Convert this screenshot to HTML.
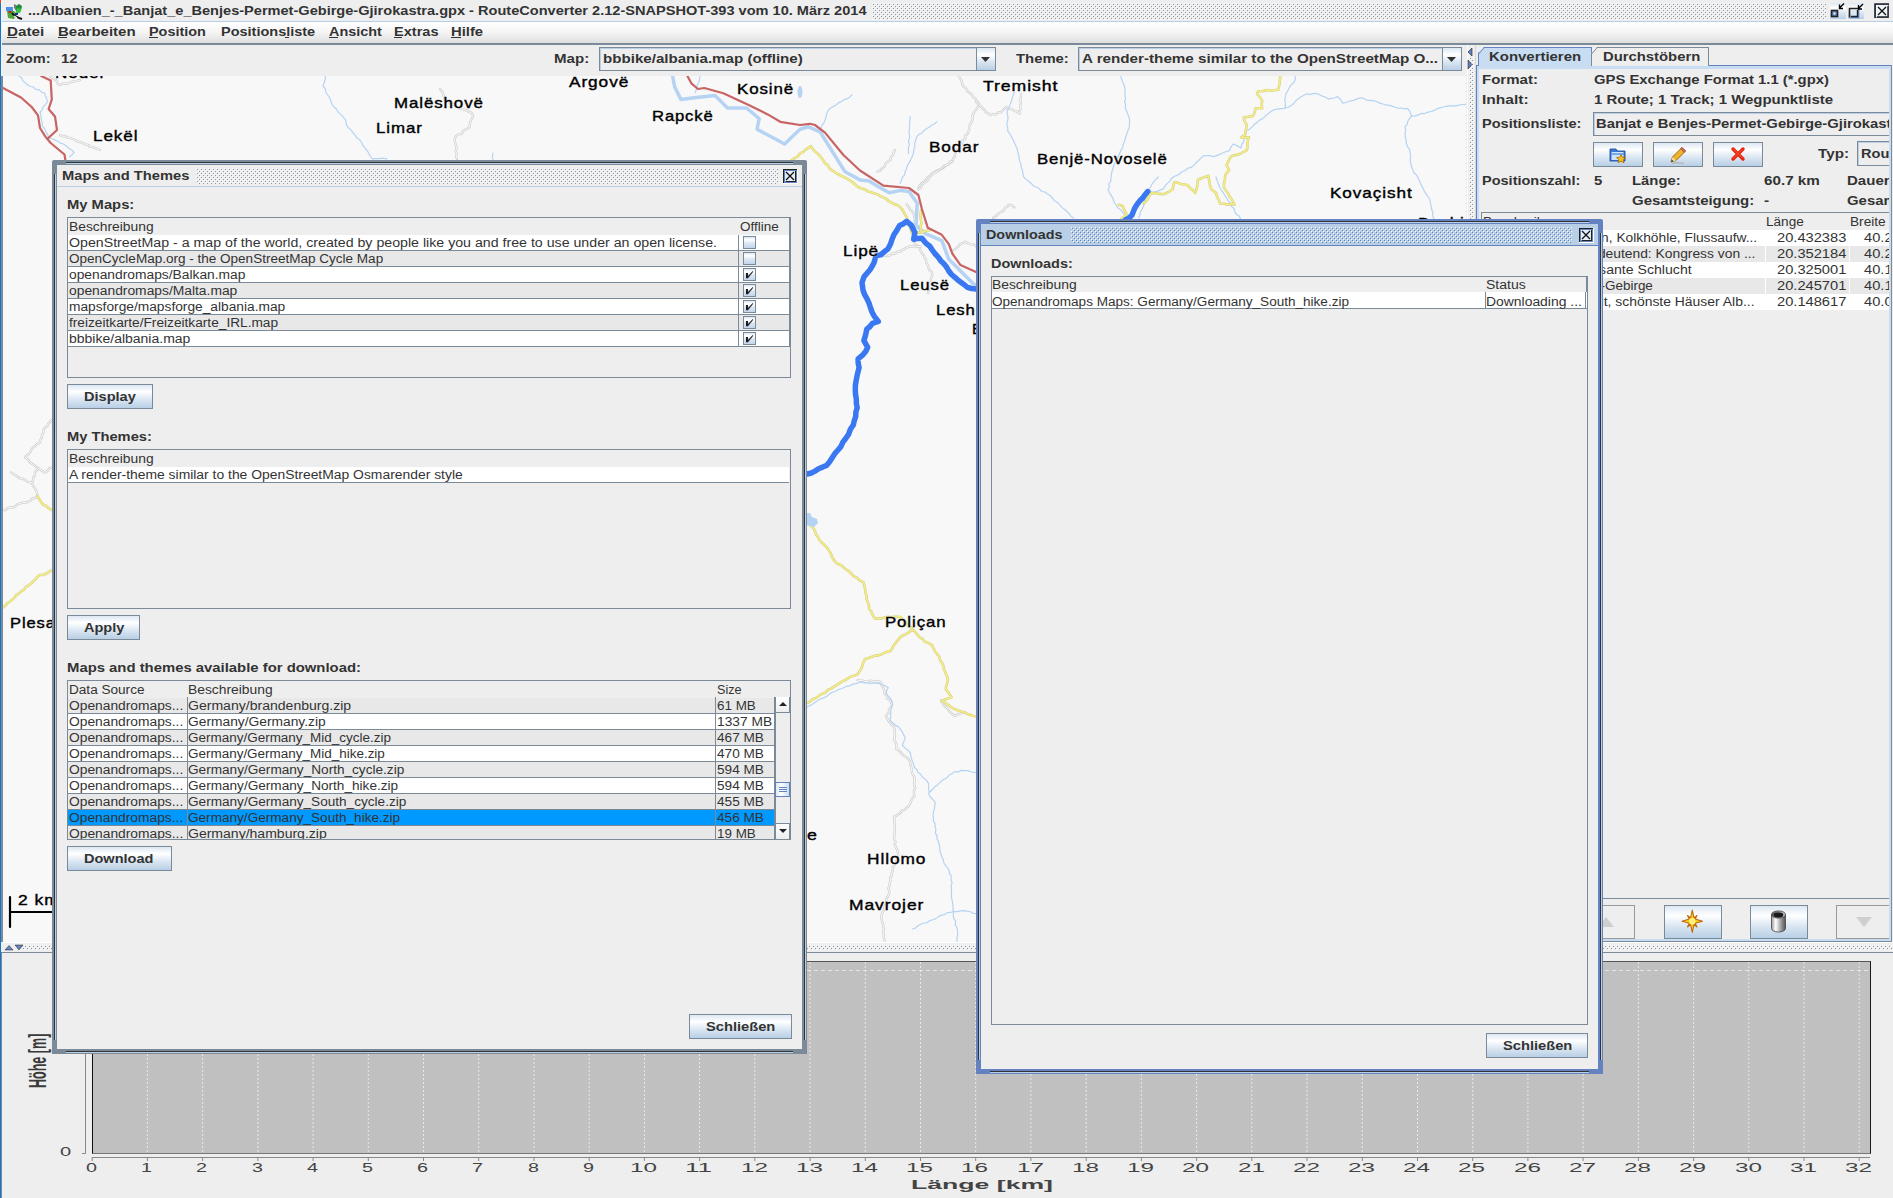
<!DOCTYPE html><html><head><meta charset="utf-8"><style>
html,body{margin:0;padding:0}
body{width:1893px;height:1198px;overflow:hidden;position:relative;background:#eeeeee;font-family:"Liberation Sans",sans-serif}
div{position:absolute;box-sizing:border-box}
.t{white-space:pre;transform-origin:0 0}
.bumps{background-image:radial-gradient(circle at 1px 1px,#8595a8 0.75px,transparent 1px),radial-gradient(circle at 3px 3px,#8595a8 0.75px,transparent 1px);background-size:4px 4px}
.bumpsA{background-image:radial-gradient(circle at 1px 1px,#6a7fb0 0.75px,transparent 1px),radial-gradient(circle at 3px 3px,#6a7fb0 0.75px,transparent 1px);background-size:4px 4px}
.btn{border:1px solid #7a8a99;background:linear-gradient(#dde8f3 0%,#fff 30%,#dde8f3 60%,#b8cfe5 100%)}
.dbtn{border:1px solid #999;background:#eee}
.grid{background:#fff}
</style></head><body><svg style="position:absolute;left:0;top:0" width="0" height="0"><defs>
<pattern id="bumpI" width="4" height="4" patternUnits="userSpaceOnUse"><rect x="0" y="0" width="1" height="1" fill="#ffffff"/><rect x="1" y="1" width="1" height="1" fill="#8797a8"/><rect x="2" y="2" width="1" height="1" fill="#ffffff"/><rect x="3" y="3" width="1" height="1" fill="#8797a8"/></pattern>
<pattern id="bumpA" width="4" height="4" patternUnits="userSpaceOnUse"><rect x="0" y="0" width="1" height="1" fill="#ffffff"/><rect x="1" y="1" width="1" height="1" fill="#6382bf"/><rect x="2" y="2" width="1" height="1" fill="#ffffff"/><rect x="3" y="3" width="1" height="1" fill="#6382bf"/></pattern>
</defs></svg><div style="left:0px;top:0px;width:1px;height:1198px;background:#1476c4"></div><div style="left:0px;top:0px;width:1px;height:3px;background:#ff3a10"></div><div style="left:1px;top:0px;width:1px;height:22px;background:#f4f4f4"></div><div style="left:2px;top:0px;width:1891px;height:21px;background:#eeeeee"></div><div style="left:2px;top:21px;width:1891px;height:1px;background:#b8cfe5"></div><svg style="position:absolute;left:5px;top:2px" width="18" height="18" viewBox="0 0 18 18"><path d="M14 2 L17 4 L16 9 L13 11 L11 9 L9 5 Z" fill="#1f8f3a"/><path d="M12 6 L16 7 L15 11 L11 11 Z" fill="#3ac24a"/><path d="M9 2 L11 3 L11 7 L9 6 Z" fill="#777"/><path d="M1 5 L8 5 L8 9 L1 9 Z" fill="#4a90e8"/><path d="M2 9 L9 9 L12 12 L9 17 L3 16 Z" fill="#4aa83a"/><ellipse cx="5" cy="10" rx="1.6" ry="0.9" fill="#e01010"/><path d="M7 11 Q10 15 17 17" stroke="#111" stroke-width="2" fill="none"/><path d="M9 14 L12 16" stroke="#fff" stroke-width="1.2"/><rect x="10" y="11" width="3" height="2" fill="#1a2aa0"/></svg><div class="t" style="left:27.5px;top:5.04px;font-size:12px;line-height:12px;font-weight:bold;color:#333;letter-spacing:0px;transform:scaleX(1.2136);">...Albanien_-_Banjat_e_Benjes-Permet-Gebirge-Gjirokastra.gpx - RouteConverter 2.12-SNAPSHOT-393 vom 10. März 2014</div><svg style="position:absolute;left:872px;top:3px" width="954" height="17"><rect x="0" y="0" width="954" height="17" fill="url(#bumpI)" transform="translate(0,0)"/></svg><svg style="position:absolute;left:1829px;top:3px" width="62" height="17" viewBox="0 0 62 17">
<defs><linearGradient id="tg" x1="0" y1="0" x2="0" y2="1"><stop offset="0" stop-color="#dde8f3"/><stop offset="0.3" stop-color="#fff"/><stop offset="0.6" stop-color="#dde8f3"/><stop offset="1" stop-color="#b8cfe5"/></linearGradient></defs>
<rect x="1" y="0" width="16" height="16" fill="url(#tg)"/>
<rect x="19" y="0" width="16" height="16" fill="url(#tg)"/>
<rect x="2.5" y="7.5" width="6" height="6" fill="#6382bf" stroke="#222" stroke-width="1.6"/>
<rect x="4.5" y="9.5" width="2" height="2" fill="#eef4fa"/>
<path d="M15 0.5 L10.5 5 M10.5 1.5 V5.5 H14" stroke="#000" stroke-width="1.4" fill="none"/>
<path d="M20.5 14.5 V5.5 H29.5" stroke="#222" stroke-width="1.6" fill="none"/><path d="M21 14.5 H29.5 V6" stroke="#6382bf" stroke-width="1.6" fill="none"/>
<path d="M22.5 13 V7 H28 V13 Z" fill="#dde8f3"/><path d="M22 13.5 H28.5 V7" stroke="#222" stroke-width="1.4" fill="none"/>
<path d="M34 1 L29.5 5.5 M29.5 2 V6 H33" stroke="#000" stroke-width="1.4" fill="none"/>
<rect x="46.5" y="1.5" width="13" height="13" fill="#eef4fa" stroke="#6382bf" stroke-width="1"/>
<path d="M46 15 V1 H60" stroke="#222" stroke-width="1.6" fill="none"/><path d="M48 14 H59 V3" stroke="#222" stroke-width="1.4" fill="none"/>
<path d="M49 4 L57 12 M57 4 L49 12" stroke="#111" stroke-width="1.3"/>
</svg><div style="left:2px;top:22px;width:1891px;height:21px;background:linear-gradient(#ffffff,#f4f4f4 50%,#dedede)"></div><div style="left:2px;top:43px;width:1891px;height:2px;background:#7a8a99"></div><div class="t" style="left:7.1px;top:25.54px;font-size:12px;line-height:12px;font-weight:bold;color:#333;letter-spacing:0px;transform:scaleX(1.2698);">Datei</div><div style="left:7px;top:37px;width:10px;height:1px;background:#333"></div><div class="t" style="left:58px;top:25.54px;font-size:12px;line-height:12px;font-weight:bold;color:#333;letter-spacing:0px;transform:scaleX(1.2514);">Bearbeiten</div><div style="left:58px;top:37px;width:9px;height:1px;background:#333"></div><div class="t" style="left:149.2px;top:25.54px;font-size:12px;line-height:12px;font-weight:bold;color:#333;letter-spacing:0px;transform:scaleX(1.2024);">Position</div><div style="left:149px;top:37px;width:9px;height:1px;background:#333"></div><div class="t" style="left:220.5px;top:25.54px;font-size:12px;line-height:12px;font-weight:bold;color:#333;letter-spacing:0px;transform:scaleX(1.2070);">Positionsliste</div><div style="left:285px;top:37px;width:4px;height:1px;background:#333"></div><div class="t" style="left:328.8px;top:25.54px;font-size:12px;line-height:12px;font-weight:bold;color:#333;letter-spacing:0px;transform:scaleX(1.1992);">Ansicht</div><div style="left:329px;top:37px;width:9px;height:1px;background:#333"></div><div class="t" style="left:394px;top:25.54px;font-size:12px;line-height:12px;font-weight:bold;color:#333;letter-spacing:0px;transform:scaleX(1.2126);">Extras</div><div style="left:394px;top:37px;width:8px;height:1px;background:#333"></div><div class="t" style="left:451px;top:25.54px;font-size:12px;line-height:12px;font-weight:bold;color:#333;letter-spacing:0px;transform:scaleX(1.2333);">Hilfe</div><div style="left:451px;top:37px;width:10px;height:1px;background:#333"></div><div style="left:2px;top:45px;width:1464px;height:31px;background:#eeeeee"></div><div class="t" style="left:5.7px;top:52.84px;font-size:12px;line-height:12px;font-weight:bold;color:#333;letter-spacing:0px;transform:scaleX(1.2141);">Zoom:</div><div class="t" style="left:60.5px;top:52.84px;font-size:12px;line-height:12px;font-weight:bold;color:#333;letter-spacing:0px;transform:scaleX(1.2396);">12</div><div class="t" style="left:554.4px;top:52.64px;font-size:12px;line-height:12px;font-weight:bold;color:#333;letter-spacing:0px;transform:scaleX(1.2568);">Map:</div><div class="t" style="left:1016px;top:52.64px;font-size:12px;line-height:12px;font-weight:bold;color:#333;letter-spacing:0px;transform:scaleX(1.2365);">Theme:</div><div style="left:599px;top:47px;width:397px;height:24px;border:1px solid #7a8a99;background:#eee"></div><div style="left:600px;top:48px;width:395px;height:22px;border:1px solid #b8cfe5;border-right:none;border-bottom:none"></div><div style="left:976px;top:47px;width:20px;height:24px;border:1px solid #7a8a99;background:linear-gradient(#dde8f3 0%,#fff 30%,#dde8f3 60%,#b8cfe5 100%)"></div><svg style="position:absolute;left:981px;top:57px" width="10" height="6"><path d="M0 0 L9 0 L4.5 5 Z" fill="#333"/></svg><div class="t" style="left:602.5px;top:52.64px;font-size:12px;line-height:12px;font-weight:bold;color:#333;letter-spacing:0px;transform:scaleX(1.2588);">bbbike/albania.map (offline)</div><div style="left:1078px;top:47px;width:384px;height:24px;border:1px solid #7a8a99;background:#eee"></div><div style="left:1079px;top:48px;width:382px;height:22px;border:1px solid #b8cfe5;border-right:none;border-bottom:none"></div><div style="left:1442px;top:47px;width:20px;height:24px;border:1px solid #7a8a99;background:linear-gradient(#dde8f3 0%,#fff 30%,#dde8f3 60%,#b8cfe5 100%)"></div><svg style="position:absolute;left:1447px;top:57px" width="10" height="6"><path d="M0 0 L9 0 L4.5 5 Z" fill="#333"/></svg><div class="t" style="left:1081.5px;top:52.64px;font-size:12px;line-height:12px;font-weight:bold;color:#333;letter-spacing:0px;transform:scaleX(1.2673);">A render-theme similar to the OpenStreetMap O...</div><div style="left:1px;top:76px;width:2px;height:866px;background:#7a8a99"></div><svg style="position:absolute;left:3px;top:76px" width="1463" height="866" viewBox="0 0 1463 866"><rect width="1463" height="866" fill="#f8f8f8"/><g fill="none" stroke-linejoin="round" stroke-linecap="round"><polyline points="955.6,0.0 957.1,2.5 958.7,5.1 959.1,8.1 960.6,10.7 963.0,12.3 964.3,14.9 966.4,16.8 968.7,18.5 970.0,21.1 972.5,22.7 973.8,25.2 975.6,27.4 975.0,30.2 973.8,32.7 972.0,35.0 970.6,37.4 969.3,39.9 969.8,42.8 968.9,45.4 967.5,47.9 966.3,50.3 966.2,53.1 965.6,55.8 964.4,58.1 962.2,59.7 962.3,62.7 959.7,64.1 959.3,66.8 958.2,69.2 956.9,71.3 955.3,73.3 953.1,75.0 952.3,77.5 951.7,80.5 950.0,83.0 949.0,85.8 946.7,86.9 944.7,88.6 942.3,89.6 940.5,91.7 938.3,93.0 935.9,94.1 933.3,94.6 931.3,96.3 929.0,97.5 927.3,99.7 925.0,101.2 923.3,103.3 921.5,105.4 919.0,106.7 917.2,108.7 915.5,110.9" stroke="#cfcfcf" stroke-width="2.4"/><polyline points="955.6,0.0 957.1,2.5 958.7,5.1 959.1,8.1 960.6,10.7 963.0,12.3 964.3,14.9 966.4,16.8 968.7,18.5 970.0,21.1 972.5,22.7 973.8,25.2 975.6,27.4 975.0,30.2 973.8,32.7 972.0,35.0 970.6,37.4 969.3,39.9 969.8,42.8 968.9,45.4 967.5,47.9 966.3,50.3 966.2,53.1 965.6,55.8 964.4,58.1 962.2,59.7 962.3,62.7 959.7,64.1 959.3,66.8 958.2,69.2 956.9,71.3 955.3,73.3 953.1,75.0 952.3,77.5 951.7,80.5 950.0,83.0 949.0,85.8 946.7,86.9 944.7,88.6 942.3,89.6 940.5,91.7 938.3,93.0 935.9,94.1 933.3,94.6 931.3,96.3 929.0,97.5 927.3,99.7 925.0,101.2 923.3,103.3 921.5,105.4 919.0,106.7 917.2,108.7 915.5,110.9" stroke="#fbfbfb" stroke-width="1"/><polyline points="973.0,25.7 975.5,27.6 977.3,30.2 979.6,32.3 981.5,34.0 983.1,36.2 985.3,37.6 987.5,39.0 990.1,38.0 993.0,38.5 995.3,36.3 998.1,36.3 1000.6,33.5 1003.4,31.0 1005.8,32.7 1009.0,33.1 1011.3,34.9 1014.3,35.5 1016.6,37.6 1017.1,34.8 1017.4,32.0 1017.3,29.1 1018.0,26.3 1017.2,23.4 1018.1,20.7 1017.9,17.8" stroke="#cfcfcf" stroke-width="2.4"/><polyline points="973.0,25.7 975.5,27.6 977.3,30.2 979.6,32.3 981.5,34.0 983.1,36.2 985.3,37.6 987.5,39.0 990.1,38.0 993.0,38.5 995.3,36.3 998.1,36.3 1000.6,33.5 1003.4,31.0 1005.8,32.7 1009.0,33.1 1011.3,34.9 1014.3,35.5 1016.6,37.6 1017.1,34.8 1017.4,32.0 1017.3,29.1 1018.0,26.3 1017.2,23.4 1018.1,20.7 1017.9,17.8" stroke="#fbfbfb" stroke-width="1"/><polyline points="990.2,142.0 992.3,140.5 994.2,138.8 996.1,137.0 998.5,135.9 1000.6,134.4 1002.0,132.1 1004.2,130.7 1006.0,128.8 1009.0,129.4 1011.3,131.4" stroke="#cfcfcf" stroke-width="2.4"/><polyline points="990.2,142.0 992.3,140.5 994.2,138.8 996.1,137.0 998.5,135.9 1000.6,134.4 1002.0,132.1 1004.2,130.7 1006.0,128.8 1009.0,129.4 1011.3,131.4" stroke="#fbfbfb" stroke-width="1"/><polyline points="854.6,604.0 857.1,604.6 859.7,604.7 862.2,605.6 864.8,605.5 867.4,604.7 870.0,605.1 872.5,605.9 875.1,604.9 877.6,606.0 878.6,608.9 880.1,611.6 881.2,614.4 881.5,617.5 883.7,619.4 884.1,622.4 886.6,624.0 888.0,626.4 889.1,629.0 888.0,631.4 886.0,633.2 886.0,636.2 884.2,638.2 882.9,640.4 884.5,642.5 885.6,644.9 887.3,646.9 888.9,649.0 891.0,650.6 891.7,653.4 891.7,656.2 892.0,659.0 891.4,661.9 891.5,664.7 893.2,667.3 893.4,670.1 893.1,673.0 895.5,674.3 897.5,676.1 899.3,678.1 901.2,680.0 903.6,681.3 905.4,683.3 907.1,685.6 907.3,688.5 908.2,691.1 908.8,693.9 909.0,696.7 910.3,699.2 911.5,701.7 911.5,704.3 911.3,706.9 911.2,709.5 912.3,712.2 910.8,714.8 911.0,717.4 911.5,720.0 909.4,722.2 908.0,724.9 907.1,727.8 905.4,730.3 903.4,731.9 901.7,733.8 899.1,734.5 897.6,736.8 895.6,738.3 893.4,739.6 891.0,740.6 891.6,743.4 891.3,746.2 891.8,749.0 891.9,751.8 891.6,754.6 891.7,757.4 891.2,760.2 891.0,763.0 892.5,765.5 891.7,768.6 892.9,771.3 894.4,773.8 894.9,776.6 895.2,779.4 894.5,782.0 893.6,784.5 893.1,787.1 891.0,789.2 889.8,791.6 889.8,794.4 888.8,796.9 888.6,799.7 887.0,801.9 887.4,804.6 886.7,807.2 886.6,809.8 885.3,812.4 886.2,815.1 886.1,817.8 885.0,820.3 883.3,822.7 883.2,825.5 882.9,828.4 881.4,830.8 881.4,833.7 879.6,836.1 878.8,838.7 878.2,841.3 878.7,843.8 879.2,846.3 880.3,848.8 880.3,851.3 880.9,853.8 880.1,856.4 880.8,858.9 880.6,861.5 881.7,863.9 882.1,866.4 881.9,869.0" stroke="#cfcfcf" stroke-width="2.4"/><polyline points="854.6,604.0 857.1,604.6 859.7,604.7 862.2,605.6 864.8,605.5 867.4,604.7 870.0,605.1 872.5,605.9 875.1,604.9 877.6,606.0 878.6,608.9 880.1,611.6 881.2,614.4 881.5,617.5 883.7,619.4 884.1,622.4 886.6,624.0 888.0,626.4 889.1,629.0 888.0,631.4 886.0,633.2 886.0,636.2 884.2,638.2 882.9,640.4 884.5,642.5 885.6,644.9 887.3,646.9 888.9,649.0 891.0,650.6 891.7,653.4 891.7,656.2 892.0,659.0 891.4,661.9 891.5,664.7 893.2,667.3 893.4,670.1 893.1,673.0 895.5,674.3 897.5,676.1 899.3,678.1 901.2,680.0 903.6,681.3 905.4,683.3 907.1,685.6 907.3,688.5 908.2,691.1 908.8,693.9 909.0,696.7 910.3,699.2 911.5,701.7 911.5,704.3 911.3,706.9 911.2,709.5 912.3,712.2 910.8,714.8 911.0,717.4 911.5,720.0 909.4,722.2 908.0,724.9 907.1,727.8 905.4,730.3 903.4,731.9 901.7,733.8 899.1,734.5 897.6,736.8 895.6,738.3 893.4,739.6 891.0,740.6 891.6,743.4 891.3,746.2 891.8,749.0 891.9,751.8 891.6,754.6 891.7,757.4 891.2,760.2 891.0,763.0 892.5,765.5 891.7,768.6 892.9,771.3 894.4,773.8 894.9,776.6 895.2,779.4 894.5,782.0 893.6,784.5 893.1,787.1 891.0,789.2 889.8,791.6 889.8,794.4 888.8,796.9 888.6,799.7 887.0,801.9 887.4,804.6 886.7,807.2 886.6,809.8 885.3,812.4 886.2,815.1 886.1,817.8 885.0,820.3 883.3,822.7 883.2,825.5 882.9,828.4 881.4,830.8 881.4,833.7 879.6,836.1 878.8,838.7 878.2,841.3 878.7,843.8 879.2,846.3 880.3,848.8 880.3,851.3 880.9,853.8 880.1,856.4 880.8,858.9 880.6,861.5 881.7,863.9 882.1,866.4 881.9,869.0" stroke="#fbfbfb" stroke-width="1"/><polyline points="938.0,624.0 939.1,626.3 940.3,628.5 942.0,630.4 944.0,632.0 945.6,634.4 947.6,636.4 949.7,638.3 952.0,640.0 954.3,638.5 957.0,638.0 959.4,636.8 962.0,636.0" stroke="#cfcfcf" stroke-width="2.4"/><polyline points="938.0,624.0 939.1,626.3 940.3,628.5 942.0,630.4 944.0,632.0 945.6,634.4 947.6,636.4 949.7,638.3 952.0,640.0 954.3,638.5 957.0,638.0 959.4,636.8 962.0,636.0" stroke="#fbfbfb" stroke-width="1"/><polyline points="437.0,13.0 439.0,15.4 440.3,18.1 441.1,21.1 442.0,24.0 444.5,24.8 446.5,26.7 448.6,28.3 451.4,28.7 453.3,30.7 455.6,32.0 458.0,33.1 460.8,33.4 463.2,34.4 465.6,35.6 467.9,36.7 470.0,38.4 469.9,41.1 468.5,43.4 467.3,45.8 466.8,48.3 466.7,51.0 464.6,52.5 462.3,53.8 460.1,55.1 458.7,57.7 456.0,58.3 453.7,59.5 452.0,61.6 451.7,64.3 452.1,66.9 452.8,69.5 453.6,72.1 452.7,74.9 453.8,77.5 453.2,80.2 454.0,82.8" stroke="#cfcfcf" stroke-width="2.4"/><polyline points="437.0,13.0 439.0,15.4 440.3,18.1 441.1,21.1 442.0,24.0 444.5,24.8 446.5,26.7 448.6,28.3 451.4,28.7 453.3,30.7 455.6,32.0 458.0,33.1 460.8,33.4 463.2,34.4 465.6,35.6 467.9,36.7 470.0,38.4 469.9,41.1 468.5,43.4 467.3,45.8 466.8,48.3 466.7,51.0 464.6,52.5 462.3,53.8 460.1,55.1 458.7,57.7 456.0,58.3 453.7,59.5 452.0,61.6 451.7,64.3 452.1,66.9 452.8,69.5 453.6,72.1 452.7,74.9 453.8,77.5 453.2,80.2 454.0,82.8" stroke="#fbfbfb" stroke-width="1"/><polyline points="0.0,434.0 2.7,434.0 4.8,432.2 7.3,431.3 10.0,431.4 12.4,430.2 14.5,428.4 16.9,427.5 19.4,426.7 22.0,426.5 24.8,426.0 27.2,424.8 29.2,422.5 32.0,422.0 34.5,420.0 33.9,417.1 33.1,414.3 31.5,411.8 29.9,409.3 29.0,406.5 30.1,404.0 30.4,401.3 32.0,399.0 31.8,396.3 34.2,394.2 34.0,391.5 31.8,389.6 29.4,388.1 27.0,386.5 25.1,383.4 22.0,381.5 23.6,379.5 25.8,378.1 27.4,376.1 28.3,373.5 30.0,371.6 32.0,370.0 34.3,367.9 37.0,366.5 37.4,363.9 38.8,361.5 39.1,358.9 40.2,356.5 40.5,353.8 42.0,351.5 44.3,350.1 45.3,347.6 47.2,345.8 49.0,344.0" stroke="#cfcfcf" stroke-width="2.4"/><polyline points="0.0,434.0 2.7,434.0 4.8,432.2 7.3,431.3 10.0,431.4 12.4,430.2 14.5,428.4 16.9,427.5 19.4,426.7 22.0,426.5 24.8,426.0 27.2,424.8 29.2,422.5 32.0,422.0 34.5,420.0 33.9,417.1 33.1,414.3 31.5,411.8 29.9,409.3 29.0,406.5 30.1,404.0 30.4,401.3 32.0,399.0 31.8,396.3 34.2,394.2 34.0,391.5 31.8,389.6 29.4,388.1 27.0,386.5 25.1,383.4 22.0,381.5 23.6,379.5 25.8,378.1 27.4,376.1 28.3,373.5 30.0,371.6 32.0,370.0 34.3,367.9 37.0,366.5 37.4,363.9 38.8,361.5 39.1,358.9 40.2,356.5 40.5,353.8 42.0,351.5 44.3,350.1 45.3,347.6 47.2,345.8 49.0,344.0" stroke="#fbfbfb" stroke-width="1"/><polyline points="8.0,396.5 12.0,399.0 14.4,400.4 16.7,402.2 19.6,402.6 22.0,404.0 25.2,406.0 29.0,406.5" stroke="#cfcfcf" stroke-width="2.4"/><polyline points="8.0,396.5 12.0,399.0 14.4,400.4 16.7,402.2 19.6,402.6 22.0,404.0 25.2,406.0 29.0,406.5" stroke="#fbfbfb" stroke-width="1"/><polyline points="34.0,391.5 36.7,393.2 39.3,394.9 42.0,396.5 44.4,394.9 46.2,392.5 49.0,391.5" stroke="#cfcfcf" stroke-width="2.4"/><polyline points="34.0,391.5 36.7,393.2 39.3,394.9 42.0,396.5 44.4,394.9 46.2,392.5 49.0,391.5" stroke="#fbfbfb" stroke-width="1"/><polyline points="47.0,0.0 49.1,1.7 51.4,3.2 53.6,4.7 54.6,7.6 57.0,9.0 59.4,7.8 62.0,7.7 64.6,7.5 67.0,6.6 69.4,5.6 72.0,5.3 74.5,4.7 77.0,4.0" stroke="#cfcfcf" stroke-width="2.4"/><polyline points="47.0,0.0 49.1,1.7 51.4,3.2 53.6,4.7 54.6,7.6 57.0,9.0 59.4,7.8 62.0,7.7 64.6,7.5 67.0,6.6 69.4,5.6 72.0,5.3 74.5,4.7 77.0,4.0" stroke="#fbfbfb" stroke-width="1"/><polyline points="57.0,59.0 59.3,60.3 62.2,60.0 64.5,61.6 67.1,61.9 69.6,62.8 72.0,64.0 74.4,65.5 77.2,66.0 79.8,67.1 82.2,68.4 85.0,69.0 87.1,70.7 89.8,70.9 92.1,72.2 94.6,73.0 97.0,74.0" stroke="#cfcfcf" stroke-width="2.4"/><polyline points="57.0,59.0 59.3,60.3 62.2,60.0 64.5,61.6 67.1,61.9 69.6,62.8 72.0,64.0 74.4,65.5 77.2,66.0 79.8,67.1 82.2,68.4 85.0,69.0 87.1,70.7 89.8,70.9 92.1,72.2 94.6,73.0 97.0,74.0" stroke="#fbfbfb" stroke-width="1"/><polyline points="903.7,128.4 905.4,130.7 906.9,133.3 909.0,135.3 910.7,137.7 911.2,140.5 911.9,143.3 911.6,146.3 913.0,149.0 911.9,151.5 910.8,154.0 909.8,156.6 910.2,159.5 909.0,162.0 910.4,164.2 911.2,166.8 912.8,168.8 915.3,170.3 916.8,172.5 917.7,175.0 919.0,177.3 920.8,179.4 921.7,181.8 923.1,184.1 923.3,186.9 924.8,189.1 925.5,191.7 926.5,194.1 928.8,195.9 929.4,198.5 928.4,201.1 927.8,203.8 928.1,206.7 926.1,209.0 925.3,211.7 925.9,214.6 924.8,217.2" stroke="#cfcfcf" stroke-width="2.4"/><polyline points="903.7,128.4 905.4,130.7 906.9,133.3 909.0,135.3 910.7,137.7 911.2,140.5 911.9,143.3 911.6,146.3 913.0,149.0 911.9,151.5 910.8,154.0 909.8,156.6 910.2,159.5 909.0,162.0 910.4,164.2 911.2,166.8 912.8,168.8 915.3,170.3 916.8,172.5 917.7,175.0 919.0,177.3 920.8,179.4 921.7,181.8 923.1,184.1 923.3,186.9 924.8,189.1 925.5,191.7 926.5,194.1 928.8,195.9 929.4,198.5 928.4,201.1 927.8,203.8 928.1,206.7 926.1,209.0 925.3,211.7 925.9,214.6 924.8,217.2" stroke="#fbfbfb" stroke-width="1"/><polyline points="915.4,113.2 917.9,111.6 919.1,108.8 921.2,106.8 923.8,105.3 925.5,102.9 927.0,100.4 929.0,98.3 931.6,97.0 934.1,95.5 936.3,93.6 938.8,92.2 940.6,90.3 942.8,89.1 945.3,88.3 946.7,85.9 949.3,85.2" stroke="#cfcfcf" stroke-width="2.4"/><polyline points="915.4,113.2 917.9,111.6 919.1,108.8 921.2,106.8 923.8,105.3 925.5,102.9 927.0,100.4 929.0,98.3 931.6,97.0 934.1,95.5 936.3,93.6 938.8,92.2 940.6,90.3 942.8,89.1 945.3,88.3 946.7,85.9 949.3,85.2" stroke="#fbfbfb" stroke-width="1"/><polyline points="950.5,174.0 952.9,172.4 955.1,170.6 957.0,168.4 959.7,167.2 962.2,165.8 964.8,167.2 967.6,168.1 970.6,168.5 973.0,170.4" stroke="#cfcfcf" stroke-width="2.4"/><polyline points="950.5,174.0 952.9,172.4 955.1,170.6 957.0,168.4 959.7,167.2 962.2,165.8 964.8,167.2 967.6,168.1 970.6,168.5 973.0,170.4" stroke="#fbfbfb" stroke-width="1"/><polyline points="874.5,95.7 877.2,94.4 879.1,92.2 881.5,90.5 882.6,87.4 885.0,85.6 887.4,84.0 887.8,81.2 890.2,79.2 890.5,76.3 892.0,74.0" stroke="#cfcfcf" stroke-width="2.4"/><polyline points="874.5,95.7 877.2,94.4 879.1,92.2 881.5,90.5 882.6,87.4 885.0,85.6 887.4,84.0 887.8,81.2 890.2,79.2 890.5,76.3 892.0,74.0" stroke="#fbfbfb" stroke-width="1"/><polyline points="876.9,181.0 879.3,179.8 881.9,179.7 884.6,180.0 887.1,179.2 889.4,177.7 892.0,177.5 894.1,175.8 897.0,175.8 899.1,174.1 901.5,173.1 903.7,171.6 906.4,170.6 909.2,170.3 912.1,171.2 914.9,170.5 917.7,170.4" stroke="#cfcfcf" stroke-width="2.4"/><polyline points="876.9,181.0 879.3,179.8 881.9,179.7 884.6,180.0 887.1,179.2 889.4,177.7 892.0,177.5 894.1,175.8 897.0,175.8 899.1,174.1 901.5,173.1 903.7,171.6 906.4,170.6 909.2,170.3 912.1,171.2 914.9,170.5 917.7,170.4" stroke="#fbfbfb" stroke-width="1"/><polyline points="16.0,0.0 18.6,1.8 19.8,4.8 22.2,6.7 24.5,8.8 27.1,10.5 30.4,11.0 32.7,13.3 36.0,13.7 38.4,16.1 41.4,17.0 42.5,19.9 43.7,22.7 44.5,25.7 42.6,28.3 40.3,30.7 39.1,33.8 37.0,36.3 38.1,39.6 38.1,43.2 39.1,46.5 39.3,50.0 41.4,52.6 42.9,55.6 44.6,58.4 45.6,61.6 48.7,62.5 51.6,63.9 54.6,65.2 57.3,67.1 60.4,68.0 63.2,69.9 65.7,72.2 68.6,73.9 71.0,76.4 69.1,78.7 66.8,80.7" stroke="#b5d3f3" stroke-width="1.2"/><polyline points="322.4,0.0 322.3,3.5 321.1,6.7 320.0,10.0 322.2,12.7 322.9,16.2 324.7,19.0 326.7,21.8 327.9,25.0 328.9,28.3 331.0,31.0 333.7,33.2 335.3,36.4 338.0,38.6 340.2,41.2 342.5,43.7 343.5,49.0 345.3,51.7 347.8,53.8 349.8,56.3 351.8,58.9 353.6,61.6 356.4,63.4 358.3,66.0 360.0,69.4 362.3,72.4 364.7,75.4 366.7,79.2 369.0,82.8 372.7,82.7 376.4,82.6 380.0,82.2 383.7,82.8" stroke="#b5d3f3" stroke-width="1.2"/><polyline points="697.0,0.0 696.5,3.5 695.6,7.0 693.7,10.1 693.3,13.7 692.0,17.0" stroke="#b5d3f3" stroke-width="1.2"/><polyline points="817.0,55.8 817.8,52.5 818.9,49.4 821.0,46.6 822.3,43.5 823.2,40.3 823.9,37.0 825.4,34.0 827.8,32.0 830.4,30.4 833.2,29.0 835.5,26.9 838.4,25.6 840.8,23.7 843.9,22.9 846.6,21.2 848.8,19.0" stroke="#b5d3f3" stroke-width="1.2"/><polyline points="897.0,107.5 898.4,104.5 899.4,101.4 901.6,98.8 902.2,95.4 903.6,92.4 904.5,89.2 906.3,86.4 907.8,83.5 909.2,80.5 910.5,77.5 910.7,74.1 911.8,70.8 911.7,67.3 912.7,64.1 913.7,60.8 915.9,58.5 918.7,56.9 920.9,54.7 923.5,52.8 926.2,51.2 928.7,49.2 931.5,47.8 934.0,45.8" stroke="#b5d3f3" stroke-width="1.2"/><polyline points="907.2,40.7 907.0,43.8 906.6,46.8 906.6,49.9 906.3,53.0 906.0,56.0 906.5,59.1 906.5,62.2 905.4,65.2 906.4,68.3 905.5,71.4 905.4,74.4 905.5,77.5" stroke="#b5d3f3" stroke-width="1.2"/><polyline points="1292.3,0.0 1292.3,3.3 1291.0,6.5 1288.2,8.8 1286.3,11.7 1284.7,14.8 1283.0,17.8 1282.3,21.4 1281.9,25.0 1282.5,28.7 1281.7,32.3 1278.2,32.7 1274.6,33.2 1271.1,33.7 1268.4,35.2 1266.1,37.0 1263.7,38.9 1261.5,41.0 1259.2,42.9 1256.2,44.4 1253.8,46.7 1251.1,48.6 1248.9,51.1 1246.4,53.3 1243.4,54.8 1242.8,58.4 1241.5,61.7 1240.7,65.3 1238.7,68.4 1238.1,72.0 1234.2,69.9 1230.2,68.0 1228.0,71.2 1226.2,74.6 1222.8,75.8 1219.5,77.0 1216.3,78.6 1213.0,79.9 1209.8,80.6 1206.6,79.5 1203.4,79.6 1200.2,79.9 1197.9,82.2 1195.6,84.5 1193.1,86.7 1191.0,89.2 1188.3,91.4 1184.8,92.2 1182.2,94.5 1179.0,95.8 1176.7,98.0 1173.9,99.4 1171.0,100.5 1168.5,102.4 1166.9,105.3 1164.3,107.4 1162.0,109.9 1160.6,112.9 1157.6,113.9 1154.7,115.1 1151.7,115.9 1148.7,116.9 1146.0,112.9 1144.7,115.7 1143.5,118.6 1142.7,121.6 1141.6,124.5 1141.3,127.7 1140.2,130.5 1139.0,133.4 1137.3,136.1 1136.8,139.2 1135.5,142.0" stroke="#b5d3f3" stroke-width="1.2"/><polyline points="1146.0,112.9 1147.9,110.6 1149.2,107.7 1151.1,105.4 1153.2,103.2 1155.3,101.0" stroke="#b5d3f3" stroke-width="1.2"/><polyline points="1213.0,101.0 1214.1,104.4 1215.4,107.7 1216.7,111.0 1218.3,114.2 1220.3,116.7 1221.8,119.5 1223.6,122.1 1225.4,124.8 1227.5,127.2 1228.4,130.4 1231.0,132.5 1231.8,135.8 1233.6,138.4 1236.4,140.3 1237.7,143.3 1239.4,146.0" stroke="#b5d3f3" stroke-width="1.2"/><polyline points="1281.7,32.3 1285.7,31.0 1288.3,29.4 1290.7,27.5 1292.6,25.0 1294.9,23.1 1297.8,21.1 1300.8,19.2 1304.1,17.8 1307.6,18.4 1311.2,17.4 1314.7,17.8 1318.2,19.7 1322.0,20.9 1325.3,23.1 1328.4,22.3 1331.6,22.0 1334.5,20.5 1337.6,23.5 1339.8,27.1 1343.4,26.5 1346.7,25.0 1350.3,24.4 1353.6,23.1 1357.0,21.8 1360.4,22.3 1363.5,24.1 1366.9,24.4 1370.4,24.7 1373.7,25.5 1376.8,27.1 1379.9,28.0 1383.0,28.8 1386.1,29.4 1389.3,30.1 1392.3,31.2 1395.3,32.3 1398.4,32.0 1401.4,32.8 1404.5,32.3 1407.1,36.0 1408.5,40.3 1411.8,39.8 1415.0,39.2 1417.9,37.4 1421.4,37.7 1424.4,36.3 1427.7,35.5 1430.9,34.7 1433.8,32.8 1437.0,31.9 1440.2,31.0 1444.1,30.2 1448.1,29.7 1451.9,30.1 1455.6,29.2 1459.3,28.5 1463.0,28.4" stroke="#b5d3f3" stroke-width="1.2"/><polyline points="1117.6,0.0 1118.6,3.0 1119.7,6.0 1121.0,8.9 1121.8,12.0 1122.2,15.2 1121.7,18.6 1122.5,22.0 1121.6,25.5 1122.6,28.9 1122.2,32.3 1123.8,35.3 1124.9,38.5 1126.2,41.6 1126.6,45.1 1126.4,48.7 1126.2,52.2 1124.5,55.3 1123.5,58.6 1122.5,62.0 1121.6,65.3 1120.2,68.5 1119.6,72.0 1117.5,74.8 1116.5,78.1 1114.7,81.1 1114.0,84.6 1111.6,87.3 1110.4,90.5 1109.8,93.5 1108.7,96.3 1108.2,99.3 1108.0,102.4 1107.7,105.5 1105.8,108.1 1106.3,111.4 1105.1,114.2 1106.7,117.1 1108.5,119.9 1110.1,122.8 1111.1,126.0 1113.0,128.8 1114.9,131.9 1118.0,133.9 1120.0,136.9 1122.7,139.2 1124.9,142.0" stroke="#b5d3f3" stroke-width="1.2"/><polyline points="1011.3,16.5 1010.1,19.3 1009.2,22.3 1008.4,25.3 1007.3,28.1 1006.2,31.0 1004.7,33.7 1004.1,36.7 1004.7,39.7 1005.1,42.7 1004.1,45.8 1004.0,48.8 1004.8,51.8 1004.7,54.8 1006.7,57.5 1008.2,60.4 1009.9,63.2 1011.2,66.3 1012.6,69.3 1014.0,72.2 1014.7,75.4 1015.6,78.5 1016.0,81.7 1016.5,84.9 1017.9,87.8 1018.2,91.2 1019.4,94.4 1020.0,97.7 1020.6,101.0 1023.2,103.4 1026.0,105.5 1028.6,107.8 1031.1,110.3 1034.1,111.3 1036.6,113.1 1038.7,115.5 1042.0,116.0 1044.3,118.0 1047.0,119.5 1049.3,122.0 1051.4,124.6 1054.4,126.4 1056.7,128.8 1058.9,131.4 1061.5,133.3 1063.8,135.5 1066.1,137.7 1068.0,140.4 1070.8,142.0" stroke="#b5d3f3" stroke-width="1.2"/><polyline points="1408.5,40.3 1406.4,42.7 1404.8,45.3 1404.1,48.5 1401.9,50.8 1402.8,53.9 1402.1,57.2 1402.1,60.4 1403.0,63.5 1403.2,66.7 1404.4,70.3 1406.5,73.5 1407.2,77.3 1407.7,80.6 1407.3,84.0 1407.7,87.2 1408.5,90.5 1409.6,93.6 1410.9,96.5 1413.3,98.8 1415.0,101.6 1416.4,104.4 1417.5,107.5 1419.0,110.3 1420.4,113.1 1421.7,115.9 1423.5,118.4 1425.2,121.0 1427.0,123.5 1427.2,126.8 1428.2,129.9 1428.6,133.2 1429.9,136.2 1429.5,139.6 1430.8,142.7 1431.0,146.0" stroke="#b5d3f3" stroke-width="1.2"/><polyline points="804.0,630.9 807.1,629.8 809.8,627.9 812.4,625.9 815.2,624.2 818.1,622.7 821.2,621.6 824.1,620.1 826.6,617.8 829.4,616.2 832.6,615.2 835.4,613.6 838.3,612.7 841.1,611.5 843.9,610.3 846.9,609.9 849.6,608.1 852.6,607.6 855.5,606.8 858.4,605.9 861.5,606.9 864.8,606.8 867.9,607.4 871.2,607.2 874.4,607.2 877.6,607.9 881.6,609.5 885.3,611.7 883.7,614.4 883.4,617.5 885.1,620.2 887.4,622.4 889.1,625.1 889.4,628.4 888.4,631.5 887.8,634.7 887.8,638.0 887.7,641.2 887.0,644.4 889.6,646.7 892.1,649.0 895.2,650.6 897.3,653.2 899.3,655.9 900.7,658.9 902.3,661.8 900.9,665.4 899.2,669.0 901.8,671.9 905.0,674.2 907.4,677.2 908.0,680.9 909.1,684.4 910.5,687.9 911.5,691.5 913.9,693.6 915.1,696.6 917.8,698.3 919.3,701.1 922.0,702.9 924.1,705.2 925.8,707.8 925.4,711.2 926.1,714.6 925.8,718.0 927.4,721.1 929.9,723.5 932.0,726.2 931.9,729.3 931.4,732.4 930.6,735.4 930.0,738.5 930.3,741.6 930.4,744.7 932.0,747.6 932.1,750.7 932.9,753.7 932.3,757.0 934.0,759.9 934.0,763.0 935.5,765.7 936.3,768.7 936.8,771.7 937.0,774.9 937.8,777.8 938.9,780.7 940.1,783.5 940.8,786.5 942.3,789.2 944.4,791.6 946.0,794.2 946.4,797.4 948.3,799.9 948.0,803.3 949.0,806.7 948.1,810.1 948.5,813.5 948.5,816.9 948.3,820.3 948.9,823.3 949.5,826.4 950.0,829.4 950.0,832.5 950.3,835.6 950.4,838.7 950.6,842.1 952.6,845.1 952.2,848.6 954.1,851.6 954.5,855.0 954.7,858.5 954.0,862.0 954.0,865.5 954.5,869.0" stroke="#b5d3f3" stroke-width="1.2"/><polyline points="926.9,716.0 929.5,713.5 931.8,710.7 934.8,708.7 937.3,706.1 940.1,703.8 943.5,702.2 946.0,699.3 949.2,697.5 952.4,695.6 955.5,695.9 958.5,694.4 961.6,694.7 964.7,694.6 968.7,696.0 973.0,696.6" stroke="#b5d3f3" stroke-width="1.2"/><polyline points="909.5,853.0 912.6,852.0 915.0,849.7 917.9,848.3 920.8,847.0 924.2,846.7 926.7,844.5 929.9,843.8 932.9,842.6 935.4,840.6 938.3,839.1 941.6,838.6 944.2,836.7 947.5,836.4 950.7,835.5 954.1,835.7 957.3,834.8 960.6,834.6 963.8,835.1 967.0,835.5 969.8,837.3 973.0,837.7" stroke="#b5d3f3" stroke-width="1.2"/><polyline points="490.0,77.0 489.4,80.5 490.0,84.0" stroke="#b5d3f3" stroke-width="1.2"/><polyline points="669.6,0.0 671.7,11.0 678.0,23.6 693.0,21.5 712.0,19.4 724.5,32.0 743.5,32.0 756.2,42.6 754.0,53.2 781.6,68.0 797.0,53.2 805.4,50.8 817.0,55.8 842.0,95.8 857.0,103.9 866.3,105.0 875.7,110.9 886.2,116.7 897.9,114.4 906.0,115.5 914.2,127.2 913.0,149.4 922.4,157.6 938.8,164.6 945.8,183.3 959.8,197.3 970.3,207.8 973.0,209.0" stroke="#b5d3f3" stroke-width="3.5"/><polyline points="788.7,84.0 791.7,82.1 794.9,80.3 797.1,77.4 800.4,75.8 802.7,73.6 805.4,71.9 807.9,70.0 809.6,72.8 811.6,75.2 814.2,77.2 816.4,79.5 818.4,82.0 820.4,84.5 822.1,87.3 824.8,89.1 826.3,92.0 828.7,94.2 831.6,96.1 834.6,97.9 837.6,99.5 840.7,101.0 843.8,102.5 846.6,104.2 849.2,106.1 851.8,108.1 854.2,110.4 857.0,112.0 860.1,112.7 863.0,114.0 865.7,115.8 868.8,116.4 871.8,117.4 874.8,118.5 877.5,120.3 880.4,121.4 883.2,122.8 885.5,125.0 888.3,126.4 891.0,128.1 894.1,128.9 896.7,130.7 898.9,133.0 900.6,135.7 902.0,138.6 903.7,141.2 904.4,144.3 905.6,147.3 906.8,150.2 907.6,153.3 908.4,156.4 911.5,156.5 914.6,156.6 917.7,156.4" stroke="#d8d080" stroke-width="2.6"/><polyline points="788.7,84.0 791.7,82.1 794.9,80.3 797.1,77.4 800.4,75.8 802.7,73.6 805.4,71.9 807.9,70.0 809.6,72.8 811.6,75.2 814.2,77.2 816.4,79.5 818.4,82.0 820.4,84.5 822.1,87.3 824.8,89.1 826.3,92.0 828.7,94.2 831.6,96.1 834.6,97.9 837.6,99.5 840.7,101.0 843.8,102.5 846.6,104.2 849.2,106.1 851.8,108.1 854.2,110.4 857.0,112.0 860.1,112.7 863.0,114.0 865.7,115.8 868.8,116.4 871.8,117.4 874.8,118.5 877.5,120.3 880.4,121.4 883.2,122.8 885.5,125.0 888.3,126.4 891.0,128.1 894.1,128.9 896.7,130.7 898.9,133.0 900.6,135.7 902.0,138.6 903.7,141.2 904.4,144.3 905.6,147.3 906.8,150.2 907.6,153.3 908.4,156.4 911.5,156.5 914.6,156.6 917.7,156.4" stroke="#f4ee88" stroke-width="1.4"/><polyline points="918.0,134.2 917.7,137.4 917.6,140.5 917.8,143.7 918.5,146.9 917.6,150.1 918.2,153.2 918.0,156.4 921.0,155.7 924.0,154.7 927.0,154.1" stroke="#d8d080" stroke-width="2.6"/><polyline points="918.0,134.2 917.7,137.4 917.6,140.5 917.8,143.7 918.5,146.9 917.6,150.1 918.2,153.2 918.0,156.4 921.0,155.7 924.0,154.7 927.0,154.1" stroke="#f4ee88" stroke-width="1.4"/><polyline points="1277.7,0.0 1276.8,3.4 1276.8,7.0 1276.0,10.4 1275.1,13.8 1271.8,14.3 1268.5,14.7 1265.2,14.0 1261.9,14.6 1258.6,15.2 1255.3,15.2 1254.0,17.8 1256.7,21.0 1259.2,24.4 1258.6,28.3 1259.2,32.3 1255.9,32.3 1252.6,32.3 1251.6,36.4 1250.0,40.3 1246.8,40.4 1243.8,41.0 1240.7,41.6 1241.5,45.1 1243.4,48.2 1243.4,51.8 1242.5,55.3 1242.0,58.8 1238.1,61.4 1242.0,61.8 1246.0,61.4 1244.9,64.6 1244.2,67.9 1244.6,71.4 1243.4,74.6 1240.3,76.1 1237.2,77.7 1234.0,78.9 1230.5,79.4 1227.5,81.2 1225.5,85.1 1223.6,89.1 1226.2,94.4 1223.8,96.7 1222.2,99.7 1221.9,103.7 1220.9,107.6 1220.9,111.6 1223.0,114.5 1225.1,117.4 1226.6,120.7 1228.9,123.5 1231.5,128.8 1227.9,127.9 1224.2,128.6 1220.6,127.7 1217.0,127.5 1215.8,123.9 1214.0,120.6 1213.0,116.9 1210.5,115.0 1208.1,112.9 1207.0,109.7 1206.5,106.4 1205.9,103.1 1205.5,99.7 1201.9,100.9 1198.4,102.2 1194.9,103.7 1194.6,107.1 1194.2,110.4 1193.2,113.6 1192.3,116.9 1189.8,114.1 1186.8,111.9 1184.4,109.0 1181.1,108.5 1177.7,108.0 1174.6,106.6 1171.2,106.3 1170.4,109.6 1169.8,112.9 1167.0,115.1 1163.9,116.8 1160.6,118.2 1156.6,117.9 1152.7,117.3 1148.7,116.9 1146.6,119.5 1145.1,122.5 1143.1,125.1 1140.8,127.5" stroke="#d8d080" stroke-width="2.6"/><polyline points="1277.7,0.0 1276.8,3.4 1276.8,7.0 1276.0,10.4 1275.1,13.8 1271.8,14.3 1268.5,14.7 1265.2,14.0 1261.9,14.6 1258.6,15.2 1255.3,15.2 1254.0,17.8 1256.7,21.0 1259.2,24.4 1258.6,28.3 1259.2,32.3 1255.9,32.3 1252.6,32.3 1251.6,36.4 1250.0,40.3 1246.8,40.4 1243.8,41.0 1240.7,41.6 1241.5,45.1 1243.4,48.2 1243.4,51.8 1242.5,55.3 1242.0,58.8 1238.1,61.4 1242.0,61.8 1246.0,61.4 1244.9,64.6 1244.2,67.9 1244.6,71.4 1243.4,74.6 1240.3,76.1 1237.2,77.7 1234.0,78.9 1230.5,79.4 1227.5,81.2 1225.5,85.1 1223.6,89.1 1226.2,94.4 1223.8,96.7 1222.2,99.7 1221.9,103.7 1220.9,107.6 1220.9,111.6 1223.0,114.5 1225.1,117.4 1226.6,120.7 1228.9,123.5 1231.5,128.8 1227.9,127.9 1224.2,128.6 1220.6,127.7 1217.0,127.5 1215.8,123.9 1214.0,120.6 1213.0,116.9 1210.5,115.0 1208.1,112.9 1207.0,109.7 1206.5,106.4 1205.9,103.1 1205.5,99.7 1201.9,100.9 1198.4,102.2 1194.9,103.7 1194.6,107.1 1194.2,110.4 1193.2,113.6 1192.3,116.9 1189.8,114.1 1186.8,111.9 1184.4,109.0 1181.1,108.5 1177.7,108.0 1174.6,106.6 1171.2,106.3 1170.4,109.6 1169.8,112.9 1167.0,115.1 1163.9,116.8 1160.6,118.2 1156.6,117.9 1152.7,117.3 1148.7,116.9 1146.6,119.5 1145.1,122.5 1143.1,125.1 1140.8,127.5" stroke="#f4ee88" stroke-width="1.4"/><polyline points="1115.7,128.8 1119.6,130.1 1121.4,134.2 1123.6,138.0 1121.0,140.6 1118.3,143.0" stroke="#d8d080" stroke-width="2.6"/><polyline points="1115.7,128.8 1119.6,130.1 1121.4,134.2 1123.6,138.0 1121.0,140.6 1118.3,143.0" stroke="#f4ee88" stroke-width="1.4"/><polyline points="804.0,446.6 807.4,449.3 810.4,452.4 812.1,455.2 812.8,458.4 815.0,460.9 816.2,463.9 818.7,466.5 821.5,468.9 823.9,471.6 825.9,474.4 827.7,477.3 829.2,481.3 831.5,485.0 833.9,487.4 837.0,488.7 839.8,490.5 842.1,492.9 845.0,494.6 848.1,497.3 850.7,500.4 854.2,501.8 856.9,504.6 860.3,506.1 861.4,509.9 862.3,513.8 862.6,517.1 863.7,520.2 863.7,523.5 864.9,526.6 865.9,529.7 866.1,533.0 868.5,535.9 869.9,539.4 871.9,542.6 875.1,542.4 878.4,542.4 881.5,541.6 884.5,540.9 887.6,541.4 890.7,540.9 893.7,540.9 896.8,540.7 899.3,542.6 901.5,545.0 903.5,547.4 905.4,550.0 908.3,551.5 910.2,554.1 912.5,556.4 914.6,559.0 916.8,561.4 919.7,563.0 921.8,565.6 925.8,567.2 929.4,569.5 930.5,572.6 932.1,575.5 934.2,578.1 936.3,580.7 937.0,584.1 939.0,586.7 940.3,589.7 940.9,593.0 942.3,596.0 943.3,599.2 944.8,602.1 944.6,606.0 943.2,609.7 942.9,613.6 945.1,616.0 946.8,618.7 948.6,621.3 945.2,622.2 942.1,623.5 939.0,625.1 942.1,626.7 945.0,628.7 947.8,630.8 950.6,632.8 953.7,634.0 956.8,635.0 959.9,635.9 962.9,637.2 965.9,638.6 969.4,639.8 973.0,640.5" stroke="#d8d080" stroke-width="2.6"/><polyline points="804.0,446.6 807.4,449.3 810.4,452.4 812.1,455.2 812.8,458.4 815.0,460.9 816.2,463.9 818.7,466.5 821.5,468.9 823.9,471.6 825.9,474.4 827.7,477.3 829.2,481.3 831.5,485.0 833.9,487.4 837.0,488.7 839.8,490.5 842.1,492.9 845.0,494.6 848.1,497.3 850.7,500.4 854.2,501.8 856.9,504.6 860.3,506.1 861.4,509.9 862.3,513.8 862.6,517.1 863.7,520.2 863.7,523.5 864.9,526.6 865.9,529.7 866.1,533.0 868.5,535.9 869.9,539.4 871.9,542.6 875.1,542.4 878.4,542.4 881.5,541.6 884.5,540.9 887.6,541.4 890.7,540.9 893.7,540.9 896.8,540.7 899.3,542.6 901.5,545.0 903.5,547.4 905.4,550.0 908.3,551.5 910.2,554.1 912.5,556.4 914.6,559.0 916.8,561.4 919.7,563.0 921.8,565.6 925.8,567.2 929.4,569.5 930.5,572.6 932.1,575.5 934.2,578.1 936.3,580.7 937.0,584.1 939.0,586.7 940.3,589.7 940.9,593.0 942.3,596.0 943.3,599.2 944.8,602.1 944.6,606.0 943.2,609.7 942.9,613.6 945.1,616.0 946.8,618.7 948.6,621.3 945.2,622.2 942.1,623.5 939.0,625.1 942.1,626.7 945.0,628.7 947.8,630.8 950.6,632.8 953.7,634.0 956.8,635.0 959.9,635.9 962.9,637.2 965.9,638.6 969.4,639.8 973.0,640.5" stroke="#f4ee88" stroke-width="1.4"/><polyline points="804.0,627.0 806.9,625.8 809.1,623.4 812.0,622.3 814.8,620.9 817.1,618.6 820.0,617.5 822.8,616.2 824.9,613.9 827.8,612.8 830.3,611.2 832.9,609.6 835.4,607.9 838.0,606.2 840.7,604.7 843.5,603.4 846.1,601.7 848.8,600.2 851.8,599.4 854.6,598.3 856.4,595.4 858.4,592.5 859.6,589.3 860.5,585.9 862.3,582.9 865.5,582.1 868.5,581.0 871.5,579.7 874.8,579.4 878.0,578.4 881.0,577.1 884.0,575.8 887.2,575.2 889.1,572.5 890.7,569.6 892.6,566.9 894.8,564.4 896.8,561.8 899.2,559.8 902.1,558.7 904.8,557.2 907.2,555.2 910.2,554.1" stroke="#d8d080" stroke-width="2.6"/><polyline points="804.0,627.0 806.9,625.8 809.1,623.4 812.0,622.3 814.8,620.9 817.1,618.6 820.0,617.5 822.8,616.2 824.9,613.9 827.8,612.8 830.3,611.2 832.9,609.6 835.4,607.9 838.0,606.2 840.7,604.7 843.5,603.4 846.1,601.7 848.8,600.2 851.8,599.4 854.6,598.3 856.4,595.4 858.4,592.5 859.6,589.3 860.5,585.9 862.3,582.9 865.5,582.1 868.5,581.0 871.5,579.7 874.8,579.4 878.0,578.4 881.0,577.1 884.0,575.8 887.2,575.2 889.1,572.5 890.7,569.6 892.6,566.9 894.8,564.4 896.8,561.8 899.2,559.8 902.1,558.7 904.8,557.2 907.2,555.2 910.2,554.1" stroke="#f4ee88" stroke-width="1.4"/><polyline points="0.0,531.5 2.4,529.6 4.3,527.1 7.1,525.6 9.5,523.6 11.6,521.4 13.5,518.9 16.2,517.3 18.4,515.1 21.2,513.6 22.8,510.9 25.7,509.5 28.1,507.6 30.2,505.3 32.6,503.3 34.4,500.8 37.0,499.0 40.1,499.0 43.0,497.8 46.0,495.9 49.0,494.0" stroke="#d8d080" stroke-width="2.6"/><polyline points="0.0,531.5 2.4,529.6 4.3,527.1 7.1,525.6 9.5,523.6 11.6,521.4 13.5,518.9 16.2,517.3 18.4,515.1 21.2,513.6 22.8,510.9 25.7,509.5 28.1,507.6 30.2,505.3 32.6,503.3 34.4,500.8 37.0,499.0 40.1,499.0 43.0,497.8 46.0,495.9 49.0,494.0" stroke="#f4ee88" stroke-width="1.4"/><polyline points="34.5,420.0 36.2,423.3 38.3,426.3 40.8,429.0 43.7,430.3 46.1,432.6 49.0,434.0" stroke="#d8d080" stroke-width="2.6"/><polyline points="34.5,420.0 36.2,423.3 38.3,426.3 40.8,429.0 43.7,430.3 46.1,432.6 49.0,434.0" stroke="#f4ee88" stroke-width="1.4"/><polyline points="0.0,12.0 18.0,21.5 28.7,31.0 35.0,39.4 37.0,52.0 42.4,60.6 47.7,67.0 61.5,78.5 62.5,85.0" stroke="#c86464" stroke-width="2.2"/><polyline points="38.2,0.0 47.7,4.6 48.8,23.6 45.6,33.0 52.0,40.5 54.0,54.0 44.5,62.7" stroke="#c86464" stroke-width="2.2"/><polyline points="684.4,0.0 688.6,7.7 695.0,13.0 701.3,12.0 720.3,17.2 745.7,28.9 764.7,38.4 777.3,45.8 797.0,49.0 807.0,47.8 812.0,49.0 822.0,56.6 840.4,79.0 857.0,94.5 880.4,109.7 906.0,112.0 915.4,119.0 918.9,133.0 924.8,151.8 938.8,158.8 945.8,168.1 949.3,177.5 957.5,189.1 973.0,196.1" stroke="#c86464" stroke-width="2.2"/><ellipse cx="797" cy="16" rx="2.5" ry="6" fill="#b5d3f3"/><path d="M803 437 l4 0 l2 4 l5 2 l1 4 l-4 4 l-8 -2 z" fill="#b5d3f3"/><polyline points="804.3,398.0 808.3,397.0 812.0,395.1 815.6,392.7 819.6,391.1 823.5,389.4 826.6,385.7 829.2,381.7 831.8,377.6 835.0,374.0 838.0,370.4 839.9,366.2 842.7,362.5 845.6,358.2 847.4,353.3 850.3,349.0 851.3,344.7 852.7,340.5 852.9,336.0 854.2,331.8 853.4,327.5 853.3,323.1 852.6,318.8 852.3,314.5 852.4,309.3 853.2,304.3 854.2,299.2 856.1,291.5 855.2,287.2 855.1,282.8 859.3,279.4 862.8,275.2 864.7,271.3 860.9,264.6 862.6,258.9 863.8,253.1 867.0,250.5 869.5,247.3 875.3,245.4 871.5,240.6 869.2,236.5 867.6,232.0 866.0,227.1 863.8,222.4 861.5,218.4 860.0,214.0 859.0,206.7 861.0,200.8 864.0,197.3 867.0,193.8 869.1,190.4 871.0,186.8 873.0,179.8 878.0,178.6 881.4,175.6 885.0,172.8 887.4,168.3 889.0,163.5 890.9,158.8 893.9,154.2 896.7,149.4 900.4,147.7 903.7,145.3 908.4,149.4 911.9,156.4 910.7,163.4 914.7,162.4 918.9,162.3 922.5,166.8 927.0,170.4 929.3,174.0 931.8,177.5 935.0,180.9 937.7,184.7 941.1,188.0 943.7,191.3 945.8,195.0 948.5,198.5 951.9,201.3 955.1,204.3 959.9,207.7 964.5,211.3 968.7,212.5 973.0,213.0" stroke="#3a78f2" stroke-width="5.5"/><polyline points="1144.7,115.6 1142.1,118.7 1139.7,122.0 1136.8,124.8 1133.9,128.6 1131.5,132.7 1128.9,139.3 1125.9,142.1 1122.3,144.0" stroke="#3a78f2" stroke-width="5.5"/><path d="M7 821 V851 M7 836 H57" stroke="#000" stroke-width="2.2"/></g></svg><div style="left:3px;top:76px;width:1463px;height:866px;overflow:hidden"><div class="t" style="left:52px;top:-10.70px;font-size:15px;line-height:15px;font-weight:normal;color:#000;letter-spacing:0.8px;transform:scaleX(1.1393);-webkit-text-stroke:0.4px #000;text-shadow:0 0 1px #fff,0 0 1px #fff,0 0 1px #fff">Nodel</div><div class="t" style="left:90px;top:52.10px;font-size:15px;line-height:15px;font-weight:normal;color:#000;letter-spacing:0.8px;transform:scaleX(1.1383);-webkit-text-stroke:0.4px #000;text-shadow:0 0 1px #fff,0 0 1px #fff,0 0 1px #fff">Lekël</div><div class="t" style="left:391px;top:19.30px;font-size:15px;line-height:15px;font-weight:normal;color:#000;letter-spacing:0.8px;transform:scaleX(1.1260);-webkit-text-stroke:0.4px #000;text-shadow:0 0 1px #fff,0 0 1px #fff,0 0 1px #fff">Malëshovë</div><div class="t" style="left:372.5px;top:44.00px;font-size:15px;line-height:15px;font-weight:normal;color:#000;letter-spacing:0.8px;transform:scaleX(1.1273);-webkit-text-stroke:0.4px #000;text-shadow:0 0 1px #fff,0 0 1px #fff,0 0 1px #fff">Limar</div><div class="t" style="left:566.2px;top:-1.70px;font-size:15px;line-height:15px;font-weight:normal;color:#000;letter-spacing:0.8px;transform:scaleX(1.1504);-webkit-text-stroke:0.4px #000;text-shadow:0 0 1px #fff,0 0 1px #fff,0 0 1px #fff">Argovë</div><div class="t" style="left:734.4px;top:5.10px;font-size:15px;line-height:15px;font-weight:normal;color:#000;letter-spacing:0.8px;transform:scaleX(1.1265);-webkit-text-stroke:0.4px #000;text-shadow:0 0 1px #fff,0 0 1px #fff,0 0 1px #fff">Kosinë</div><div class="t" style="left:649px;top:31.50px;font-size:15px;line-height:15px;font-weight:normal;color:#000;letter-spacing:0.8px;transform:scaleX(1.1071);-webkit-text-stroke:0.4px #000;text-shadow:0 0 1px #fff,0 0 1px #fff,0 0 1px #fff">Rapckë</div><div class="t" style="left:926.4px;top:63.30px;font-size:15px;line-height:15px;font-weight:normal;color:#000;letter-spacing:0.8px;transform:scaleX(1.1423);-webkit-text-stroke:0.4px #000;text-shadow:0 0 1px #fff,0 0 1px #fff,0 0 1px #fff">Bodar</div><div class="t" style="left:980px;top:2.40px;font-size:15px;line-height:15px;font-weight:normal;color:#000;letter-spacing:0.8px;transform:scaleX(1.1747);-webkit-text-stroke:0.4px #000;text-shadow:0 0 1px #fff,0 0 1px #fff,0 0 1px #fff">Tremisht</div><div class="t" style="left:1034.2px;top:75.10px;font-size:15px;line-height:15px;font-weight:normal;color:#000;letter-spacing:0.8px;transform:scaleX(1.1160);-webkit-text-stroke:0.4px #000;text-shadow:0 0 1px #fff,0 0 1px #fff,0 0 1px #fff">Benjë-Novoselë</div><div class="t" style="left:1327.3px;top:109.30px;font-size:15px;line-height:15px;font-weight:normal;color:#000;letter-spacing:0.8px;transform:scaleX(1.1437);-webkit-text-stroke:0.4px #000;text-shadow:0 0 1px #fff,0 0 1px #fff,0 0 1px #fff">Kovaçisht</div><div class="t" style="left:840.4px;top:167.10px;font-size:15px;line-height:15px;font-weight:normal;color:#000;letter-spacing:0.8px;transform:scaleX(1.1423);-webkit-text-stroke:0.4px #000;text-shadow:0 0 1px #fff,0 0 1px #fff,0 0 1px #fff">Lipë</div><div class="t" style="left:897.4px;top:201.10px;font-size:15px;line-height:15px;font-weight:normal;color:#000;letter-spacing:0.8px;transform:scaleX(1.1101);-webkit-text-stroke:0.4px #000;text-shadow:0 0 1px #fff,0 0 1px #fff,0 0 1px #fff">Leusë</div><div class="t" style="left:933.3px;top:226.00px;font-size:15px;line-height:15px;font-weight:normal;color:#000;letter-spacing:0.8px;transform:scaleX(1.1122);-webkit-text-stroke:0.4px #000;text-shadow:0 0 1px #fff,0 0 1px #fff,0 0 1px #fff">Lesh</div><div class="t" style="left:969.3px;top:245.30px;font-size:15px;line-height:15px;font-weight:normal;color:#000;letter-spacing:0.8px;transform:scaleX(1.0122);-webkit-text-stroke:0.4px #000;text-shadow:0 0 1px #fff,0 0 1px #fff,0 0 1px #fff">E</div><div class="t" style="left:882px;top:537.50px;font-size:15px;line-height:15px;font-weight:normal;color:#000;letter-spacing:0.8px;transform:scaleX(1.1216);-webkit-text-stroke:0.4px #000;text-shadow:0 0 1px #fff,0 0 1px #fff,0 0 1px #fff">Poliçan</div><div class="t" style="left:864px;top:775.10px;font-size:15px;line-height:15px;font-weight:normal;color:#000;letter-spacing:0.8px;transform:scaleX(1.1515);-webkit-text-stroke:0.4px #000;text-shadow:0 0 1px #fff,0 0 1px #fff,0 0 1px #fff">Hllomo</div><div class="t" style="left:846px;top:821.20px;font-size:15px;line-height:15px;font-weight:normal;color:#000;letter-spacing:0.8px;transform:scaleX(1.1628);-webkit-text-stroke:0.4px #000;text-shadow:0 0 1px #fff,0 0 1px #fff,0 0 1px #fff">Mavrojer</div><div class="t" style="left:804.2px;top:751.10px;font-size:15px;line-height:15px;font-weight:normal;color:#000;letter-spacing:0.8px;transform:scaleX(1.1873);-webkit-text-stroke:0.4px #000;text-shadow:0 0 1px #fff,0 0 1px #fff,0 0 1px #fff">e</div><div class="t" style="left:7px;top:538.80px;font-size:15px;line-height:15px;font-weight:normal;color:#000;letter-spacing:0.8px;transform:scaleX(1.1005);-webkit-text-stroke:0.4px #000;text-shadow:0 0 1px #fff,0 0 1px #fff,0 0 1px #fff">Plesa</div><div class="t" style="left:14.600000000000001px;top:815.80px;font-size:15px;line-height:15px;font-weight:normal;color:#000;letter-spacing:0.8px;transform:scaleX(1.1661);-webkit-text-stroke:0.4px #000;text-shadow:0 0 1px #fff,0 0 1px #fff,0 0 1px #fff">2 km</div><div class="t" style="left:1414.5px;top:138.60px;font-size:15px;line-height:15px;font-weight:normal;color:#000;letter-spacing:0.8px;transform:scaleX(1.1227);-webkit-text-stroke:0.4px #000;text-shadow:0 0 1px #fff,0 0 1px #fff,0 0 1px #fff">Bozhi</div></div><div style="left:1466px;top:45px;width:10px;height:897px;background:#eeeeee"></div><div style="left:1467px;top:45px;width:1px;height:897px;background:#ffffff"></div><svg style="position:absolute;left:1469px;top:57px" width="5" height="885"><rect x="0" y="0" width="5" height="885" fill="url(#bumpI)" transform="translate(0,0)"/></svg><svg style="position:absolute;left:1467px;top:47px" width="8" height="24"><path d="M5 1 L1 5 L5 9 Z" fill="#6382bf" stroke="#222" stroke-width="0.6"/><path d="M1 13 L5 17.5 L1 22 Z" fill="#6382bf" stroke="#222" stroke-width="0.6"/></svg><div style="left:1475px;top:45px;width:1px;height:897px;background:#d8d8d8"></div><div style="left:1476px;top:45px;width:417px;height:897px;background:#eeeeee"></div><div style="left:1476px;top:65px;width:416px;height:877px;border:1px solid #6382bf;border-right:1px solid #7a8a99;border-bottom:1px solid #7a8a99"></div><div style="left:1477px;top:66px;width:414px;height:875px;border:2px solid #c8ddf2;border-top:3px solid #c8ddf2"></div><div style="left:1478px;top:47px;width:114px;height:19px;background:#c8ddf2;border:1px solid #6382bf;border-bottom:none;clip-path:polygon(6px 0,100% 0,100% 100%,0 100%,0 6px)"></div><svg style="position:absolute;left:1478px;top:47px" width="8" height="8"><path d="M0.5 7 L6.5 0.5" stroke="#6382bf" stroke-width="1"/></svg><div style="left:1591px;top:47px;width:118px;height:19px;background:#eeeeee;border:1px solid #7a8a99;border-bottom:none;clip-path:polygon(6px 0,100% 0,100% 100%,0 100%,0 6px)"></div><svg style="position:absolute;left:1591px;top:47px" width="8" height="8"><path d="M0.5 7 L6.5 0.5" stroke="#7a8a99" stroke-width="1"/></svg><div style="left:1479px;top:64px;width:112px;height:3px;background:#c8ddf2"></div><div class="t" style="left:1488.6px;top:50.54px;font-size:12px;line-height:12px;font-weight:bold;color:#333;letter-spacing:0px;transform:scaleX(1.2443);">Konvertieren</div><div class="t" style="left:1602.7px;top:50.54px;font-size:12px;line-height:12px;font-weight:bold;color:#333;letter-spacing:0px;transform:scaleX(1.2364);">Durchstöbern</div><div style="left:1479px;top:69px;width:410px;height:870px;overflow:hidden"><div class="t" style="left:2.599999999999909px;top:5.14px;font-size:12px;line-height:12px;font-weight:bold;color:#333;letter-spacing:0px;transform:scaleX(1.2511);">Format:</div><div class="t" style="left:114.79999999999995px;top:5.14px;font-size:12px;line-height:12px;font-weight:bold;color:#333;letter-spacing:0px;transform:scaleX(1.2361);">GPS Exchange Format 1.1 (*.gpx)</div><div class="t" style="left:2.599999999999909px;top:25.04px;font-size:12px;line-height:12px;font-weight:bold;color:#333;letter-spacing:0px;transform:scaleX(1.2937);">Inhalt:</div><div class="t" style="left:114.79999999999995px;top:25.04px;font-size:12px;line-height:12px;font-weight:bold;color:#333;letter-spacing:0px;transform:scaleX(1.2464);">1 Route; 1 Track; 1 Wegpunktliste</div><div class="t" style="left:2.599999999999909px;top:48.64px;font-size:12px;line-height:12px;font-weight:bold;color:#333;letter-spacing:0px;transform:scaleX(1.2115);">Positionsliste:</div><div style="left:114px;top:43px;width:310px;height:24px;border:1px solid #7a8a99;background:#eeeeee"></div><div style="left:115px;top:44px;width:308px;height:22px;border-top:1px solid #b8cfe5;border-left:1px solid #b8cfe5"></div><div class="t" style="left:117.29999999999995px;top:49.44px;font-size:12px;line-height:12px;font-weight:bold;color:#333;letter-spacing:0px;transform:scaleX(1.2341);">Banjat e Benjes-Permet-Gebirge-Gjirokastra</div><div class="btn" style="left:114px;top:73px;width:50px;height:25px;"></div><div class="btn" style="left:174px;top:73px;width:50px;height:25px;"></div><div class="btn" style="left:234px;top:73px;width:50px;height:25px;"></div><svg style="position:absolute;left:130px;top:77px" width="18" height="18" viewBox="0 0 18 18"><path d="M1 3 H7 L8.5 5 H16 V15 H1 Z" fill="#3b78d8" stroke="#1d4f9a" stroke-width="0.9"/><rect x="2.5" y="6" width="12" height="8" fill="#cfe2fa"/><path d="M2 8 H15" stroke="#5a96e8" stroke-width="1.5"/><path d="M12 8.5 L13.4 11.3 L16.5 11.6 L14.2 13.6 L14.9 16.8 L12 15.2 L9.1 16.8 L9.8 13.6 L7.5 11.6 L10.6 11.3 Z" fill="#f8c020" stroke="#a87000" stroke-width="0.8"/></svg><svg style="position:absolute;left:189px;top:76px" width="20" height="20" viewBox="0 0 20 20"><path d="M3 17 L4.5 12 L14 2.5 L17.5 6 L8 15.5 Z" fill="#f0b428" stroke="#8a5a08" stroke-width="0.9" stroke-linejoin="round"/><path d="M14 2.5 L17.5 6 L16.2 7.3 L12.7 3.8 Z" fill="#e07070" stroke="#8a3030" stroke-width="0.6"/><path d="M3 17 L4.5 12 L8 15.5 Z" fill="#f4dca8"/><path d="M3 17 L3.8 14.5 L5.5 16.2 Z" fill="#333"/><path d="M4 18.5 Q10 17 16 18.5" stroke="#b8b8b8" stroke-width="1.6" fill="none"/></svg><svg style="position:absolute;left:251px;top:77px" width="16" height="16" viewBox="0 0 16 16"><path d="M3 3 L13 13 M13 3 L3 13" stroke="#e8220e" stroke-width="3.4" stroke-linecap="round"/><path d="M3.5 3.2 L12.5 12.2 M12.5 3.2 L3.5 12.2" stroke="#ff5a3a" stroke-width="1" stroke-linecap="round"/></svg><div class="t" style="left:338.5999999999999px;top:79.04px;font-size:12px;line-height:12px;font-weight:bold;color:#333;letter-spacing:0px;transform:scaleX(1.2698);">Typ:</div><div style="left:378px;top:72px;width:60px;height:25px;border:1px solid #7a8a99;background:#eeeeee"></div><div style="left:379px;top:73px;width:58px;height:23px;border-top:1px solid #b8cfe5;border-left:1px solid #b8cfe5"></div><div class="t" style="left:381.70000000000005px;top:79.04px;font-size:12px;line-height:12px;font-weight:bold;color:#333;letter-spacing:0px;transform:scaleX(1.2176);">Route</div><div class="t" style="left:2.599999999999909px;top:106.04px;font-size:12px;line-height:12px;font-weight:bold;color:#333;letter-spacing:0px;transform:scaleX(1.2088);">Positionszahl:</div><div class="t" style="left:114.5px;top:106.04px;font-size:12px;line-height:12px;font-weight:bold;color:#333;letter-spacing:0px;transform:scaleX(1.2381);">5</div><div class="t" style="left:152.5px;top:106.04px;font-size:12px;line-height:12px;font-weight:bold;color:#333;letter-spacing:0px;transform:scaleX(1.2364);">Länge:</div><div class="t" style="left:284.79999999999995px;top:106.04px;font-size:12px;line-height:12px;font-weight:bold;color:#333;letter-spacing:0px;transform:scaleX(1.2689);">60.7 km</div><div class="t" style="left:367.5px;top:106.04px;font-size:12px;line-height:12px;font-weight:bold;color:#333;letter-spacing:0px;transform:scaleX(1.2524);">Dauer:</div><div class="t" style="left:152.5px;top:126.04px;font-size:12px;line-height:12px;font-weight:bold;color:#333;letter-spacing:0px;transform:scaleX(1.2460);">Gesamtsteigung:</div><div class="t" style="left:284.79999999999995px;top:126.04px;font-size:12px;line-height:12px;font-weight:bold;color:#333;letter-spacing:0px;transform:scaleX(1.2937);">-</div><div class="t" style="left:367.5px;top:126.04px;font-size:12px;line-height:12px;font-weight:bold;color:#333;letter-spacing:0px;transform:scaleX(1.2416);">Gesamtabstieg:</div><div style="left:2px;top:143px;width:420px;height:687px;border:1px solid #7a8a99;background:#eeeeee"></div><div class="t" style="left:3.7px;top:147.44px;font-size:12px;line-height:12px;font-weight:normal;color:#333;letter-spacing:0px;transform:scaleX(1.1536);">Beschreibung</div><div class="t" style="left:286.99999999999994px;top:147.04px;font-size:12px;line-height:12px;font-weight:normal;color:#333;letter-spacing:0px;transform:scaleX(1.1308);">Länge</div><div class="t" style="left:371.2px;top:147.04px;font-size:12px;line-height:12px;font-weight:normal;color:#333;letter-spacing:0px;transform:scaleX(1.1384);">Breite</div><div style="left:3px;top:161px;width:420px;height:16px;background:#ffffff"></div><div class="t" style="left:15.039999999999917px;top:162.74px;font-size:12px;line-height:12px;font-weight:normal;color:#333;letter-spacing:0px;transform:scaleX(1.1467);">Bäderlandschaften, Kolkhöhle, Flussaufw...</div><div class="t" style="left:297.64000000000004px;top:162.74px;font-size:12px;line-height:12px;font-weight:normal;color:#333;letter-spacing:0px;transform:scaleX(1.2225);">20.432383</div><div class="t" style="left:384.6000000000001px;top:162.74px;font-size:12px;line-height:12px;font-weight:normal;color:#333;letter-spacing:0px;transform:scaleX(1.2228);">40.263</div><div style="left:3px;top:177px;width:420px;height:16px;background:#ffffff"></div><div style="left:3px;top:177px;width:283px;height:16px;background:#e8e8e8"></div><div style="left:287px;top:177px;width:83px;height:16px;background:#e8e8e8"></div><div style="left:371px;top:177px;width:60px;height:16px;background:#e8e8e8"></div><div class="t" style="left:102.18000000000002px;top:178.74px;font-size:12px;line-height:12px;font-weight:normal;color:#333;letter-spacing:0px;transform:scaleX(1.1518);">Bedeutend: Kongress von ...</div><div class="t" style="left:297.64000000000004px;top:178.74px;font-size:12px;line-height:12px;font-weight:normal;color:#333;letter-spacing:0px;transform:scaleX(1.2225);">20.352184</div><div class="t" style="left:384.6000000000001px;top:178.74px;font-size:12px;line-height:12px;font-weight:normal;color:#333;letter-spacing:0px;transform:scaleX(1.2228);">40.263</div><div style="left:3px;top:193px;width:420px;height:16px;background:#ffffff"></div><div class="t" style="left:76.94000000000001px;top:194.74px;font-size:12px;line-height:12px;font-weight:normal;color:#333;letter-spacing:0px;transform:scaleX(1.1755);">Interessante Schlucht</div><div class="t" style="left:297.64000000000004px;top:194.74px;font-size:12px;line-height:12px;font-weight:normal;color:#333;letter-spacing:0px;transform:scaleX(1.2225);">20.325001</div><div class="t" style="left:384.6000000000001px;top:194.74px;font-size:12px;line-height:12px;font-weight:normal;color:#333;letter-spacing:0px;transform:scaleX(1.2228);">40.163</div><div style="left:3px;top:209px;width:420px;height:16px;background:#ffffff"></div><div style="left:3px;top:209px;width:283px;height:16px;background:#e8e8e8"></div><div style="left:287px;top:209px;width:83px;height:16px;background:#e8e8e8"></div><div style="left:371px;top:209px;width:60px;height:16px;background:#e8e8e8"></div><div class="t" style="left:77.52000000000017px;top:210.74px;font-size:12px;line-height:12px;font-weight:normal;color:#333;letter-spacing:0px;transform:scaleX(1.1230);">Permet-Gebirge</div><div class="t" style="left:297.64000000000004px;top:210.74px;font-size:12px;line-height:12px;font-weight:normal;color:#333;letter-spacing:0px;transform:scaleX(1.2225);">20.245701</div><div class="t" style="left:384.6000000000001px;top:210.74px;font-size:12px;line-height:12px;font-weight:normal;color:#333;letter-spacing:0px;transform:scaleX(1.2228);">40.163</div><div style="left:3px;top:225px;width:420px;height:16px;background:#ffffff"></div><div class="t" style="left:96.27999999999993px;top:226.74px;font-size:12px;line-height:12px;font-weight:normal;color:#333;letter-spacing:0px;transform:scaleX(1.1599);">Stadt, schönste Häuser Alb...</div><div class="t" style="left:297.64000000000004px;top:226.74px;font-size:12px;line-height:12px;font-weight:normal;color:#333;letter-spacing:0px;transform:scaleX(1.2225);">20.148617</div><div class="t" style="left:384.6000000000001px;top:226.74px;font-size:12px;line-height:12px;font-weight:normal;color:#333;letter-spacing:0px;transform:scaleX(1.2228);">40.063</div><div style="left:2px;top:829px;width:410px;height:1px;background:#7a8a99"></div><div class="dbtn" style="left:99px;top:836px;width:57px;height:34px;"></div><svg style="position:absolute;left:119px;top:846px" width="16" height="12"><path d="M0 12 L8 2 L16 12 Z" fill="#cfcfcf"/></svg><div class="btn" style="left:185px;top:836px;width:58px;height:34px;"></div><svg style="position:absolute;left:201px;top:840px" width="25" height="25" viewBox="0 0 25 25"><path d="M12.3 1 L14 9 L17 6.5 L15.2 10 L22.5 12.3 L15.2 14.3 L17 18 L14 15.5 L12.3 23.5 L10.5 15.5 L7.5 18 L9.3 14.3 L2 12.3 L9.3 10 L7.5 6.5 L10.5 9 Z" fill="#f8c81c" stroke="#c06a10" stroke-width="1.1" stroke-linejoin="round"/><circle cx="12.3" cy="12.3" r="3.2" fill="#fff27a"/></svg><div class="btn" style="left:271px;top:836px;width:58px;height:34px;"></div><svg style="position:absolute;left:291px;top:840px" width="17" height="25" viewBox="0 0 17 25"><defs><linearGradient id="cyl" x1="0" x2="1"><stop offset="0" stop-color="#9a9a9a"/><stop offset="0.3" stop-color="#ffffff"/><stop offset="0.75" stop-color="#8a8a8a"/><stop offset="1" stop-color="#555"/></linearGradient><linearGradient id="cylt" x1="0" x2="1"><stop offset="0" stop-color="#555"/><stop offset="1" stop-color="#ccc"/></linearGradient></defs><path d="M1.5 5.5 V19.5 A7 3.5 0 0 0 15.5 19.5 V5.5 Z" fill="url(#cyl)" stroke="#444" stroke-width="0.8"/><ellipse cx="8.5" cy="5.5" rx="7" ry="3.6" fill="url(#cylt)" stroke="#444" stroke-width="0.8"/><ellipse cx="8.5" cy="6" rx="4.8" ry="2.4" fill="#1a1a1a"/></svg><div class="dbtn" style="left:357px;top:836px;width:60px;height:34px;"></div><svg style="position:absolute;left:377px;top:848px" width="16" height="10"><path d="M0 0 L16 0 L8 10 Z" fill="#cfcfcf"/></svg></div><div style="left:2px;top:942px;width:1891px;height:11px;background:#eeeeee"></div><div style="left:2px;top:942px;width:1891px;height:1px;background:#ffffff"></div><svg style="position:absolute;left:20px;top:945px" width="1873" height="5"><rect x="0" y="0" width="1873" height="5" fill="url(#bumpI)" transform="translate(0,0)"/></svg><svg style="position:absolute;left:4px;top:944px" width="20" height="7"><path d="M1 6 L5 1.5 L9 6 Z" fill="#6382bf" stroke="#222" stroke-width="0.5"/><path d="M11 1 L19 1 L15 6 Z" fill="#6382bf" stroke="#222" stroke-width="0.5"/></svg><div style="left:1px;top:952px;width:1892px;height:1px;background:#7a8a99"></div><div style="left:1px;top:953px;width:1px;height:245px;background:#7a8a99"></div><div style="left:92px;top:961px;width:1779px;height:193px;background:#c0c0c0;border-left:1px solid #111;border-top:1px solid #555;border-right:1px solid #1a1a1a;border-bottom:1px solid #777"></div><svg style="position:absolute;left:0;top:950px" width="1893" height="248"><path d="M147.4 12 V203" stroke="#f4f4f4" stroke-opacity="0.8" stroke-width="1" stroke-dasharray="2 2"/><path d="M202.6 12 V203" stroke="#f4f4f4" stroke-opacity="0.8" stroke-width="1" stroke-dasharray="2 2"/><path d="M257.9 12 V203" stroke="#f4f4f4" stroke-opacity="0.8" stroke-width="1" stroke-dasharray="2 2"/><path d="M313.1 12 V203" stroke="#f4f4f4" stroke-opacity="0.8" stroke-width="1" stroke-dasharray="2 2"/><path d="M368.3 12 V203" stroke="#f4f4f4" stroke-opacity="0.8" stroke-width="1" stroke-dasharray="2 2"/><path d="M423.5 12 V203" stroke="#f4f4f4" stroke-opacity="0.8" stroke-width="1" stroke-dasharray="2 2"/><path d="M478.7 12 V203" stroke="#f4f4f4" stroke-opacity="0.8" stroke-width="1" stroke-dasharray="2 2"/><path d="M534.0 12 V203" stroke="#f4f4f4" stroke-opacity="0.8" stroke-width="1" stroke-dasharray="2 2"/><path d="M589.2 12 V203" stroke="#f4f4f4" stroke-opacity="0.8" stroke-width="1" stroke-dasharray="2 2"/><path d="M644.4 12 V203" stroke="#f4f4f4" stroke-opacity="0.8" stroke-width="1" stroke-dasharray="2 2"/><path d="M699.6 12 V203" stroke="#f4f4f4" stroke-opacity="0.8" stroke-width="1" stroke-dasharray="2 2"/><path d="M754.8 12 V203" stroke="#f4f4f4" stroke-opacity="0.8" stroke-width="1" stroke-dasharray="2 2"/><path d="M810.1 12 V203" stroke="#f4f4f4" stroke-opacity="0.8" stroke-width="1" stroke-dasharray="2 2"/><path d="M865.3 12 V203" stroke="#f4f4f4" stroke-opacity="0.8" stroke-width="1" stroke-dasharray="2 2"/><path d="M920.5 12 V203" stroke="#f4f4f4" stroke-opacity="0.8" stroke-width="1" stroke-dasharray="2 2"/><path d="M975.7 12 V203" stroke="#f4f4f4" stroke-opacity="0.8" stroke-width="1" stroke-dasharray="2 2"/><path d="M1030.9 12 V203" stroke="#f4f4f4" stroke-opacity="0.8" stroke-width="1" stroke-dasharray="2 2"/><path d="M1086.2 12 V203" stroke="#f4f4f4" stroke-opacity="0.8" stroke-width="1" stroke-dasharray="2 2"/><path d="M1141.4 12 V203" stroke="#f4f4f4" stroke-opacity="0.8" stroke-width="1" stroke-dasharray="2 2"/><path d="M1196.6 12 V203" stroke="#f4f4f4" stroke-opacity="0.8" stroke-width="1" stroke-dasharray="2 2"/><path d="M1251.8 12 V203" stroke="#f4f4f4" stroke-opacity="0.8" stroke-width="1" stroke-dasharray="2 2"/><path d="M1307.0 12 V203" stroke="#f4f4f4" stroke-opacity="0.8" stroke-width="1" stroke-dasharray="2 2"/><path d="M1362.3 12 V203" stroke="#f4f4f4" stroke-opacity="0.8" stroke-width="1" stroke-dasharray="2 2"/><path d="M1417.5 12 V203" stroke="#f4f4f4" stroke-opacity="0.8" stroke-width="1" stroke-dasharray="2 2"/><path d="M1472.7 12 V203" stroke="#f4f4f4" stroke-opacity="0.8" stroke-width="1" stroke-dasharray="2 2"/><path d="M1527.9 12 V203" stroke="#f4f4f4" stroke-opacity="0.8" stroke-width="1" stroke-dasharray="2 2"/><path d="M1583.1 12 V203" stroke="#f4f4f4" stroke-opacity="0.8" stroke-width="1" stroke-dasharray="2 2"/><path d="M1638.4 12 V203" stroke="#f4f4f4" stroke-opacity="0.8" stroke-width="1" stroke-dasharray="2 2"/><path d="M1693.6 12 V203" stroke="#f4f4f4" stroke-opacity="0.8" stroke-width="1" stroke-dasharray="2 2"/><path d="M1748.8 12 V203" stroke="#f4f4f4" stroke-opacity="0.8" stroke-width="1" stroke-dasharray="2 2"/><path d="M1804.0 12 V203" stroke="#f4f4f4" stroke-opacity="0.8" stroke-width="1" stroke-dasharray="2 2"/><path d="M1859.2 12 V203" stroke="#f4f4f4" stroke-opacity="0.8" stroke-width="1" stroke-dasharray="2 2"/><path d="M93 20.5 H1869" stroke="#f4f4f4" stroke-opacity="0.7" stroke-width="1" stroke-dasharray="4 3"/><path d="M85.5 11 V203.5 H82" stroke="#888" stroke-width="1" fill="none"/><path d="M92 207.5 H1870" stroke="#888" stroke-width="1"/><path d="M92.2 207 V211" stroke="#888" stroke-width="1"/><path d="M147.4 207 V211" stroke="#888" stroke-width="1"/><path d="M202.6 207 V211" stroke="#888" stroke-width="1"/><path d="M257.9 207 V211" stroke="#888" stroke-width="1"/><path d="M313.1 207 V211" stroke="#888" stroke-width="1"/><path d="M368.3 207 V211" stroke="#888" stroke-width="1"/><path d="M423.5 207 V211" stroke="#888" stroke-width="1"/><path d="M478.7 207 V211" stroke="#888" stroke-width="1"/><path d="M534.0 207 V211" stroke="#888" stroke-width="1"/><path d="M589.2 207 V211" stroke="#888" stroke-width="1"/><path d="M644.4 207 V211" stroke="#888" stroke-width="1"/><path d="M699.6 207 V211" stroke="#888" stroke-width="1"/><path d="M754.8 207 V211" stroke="#888" stroke-width="1"/><path d="M810.1 207 V211" stroke="#888" stroke-width="1"/><path d="M865.3 207 V211" stroke="#888" stroke-width="1"/><path d="M920.5 207 V211" stroke="#888" stroke-width="1"/><path d="M975.7 207 V211" stroke="#888" stroke-width="1"/><path d="M1030.9 207 V211" stroke="#888" stroke-width="1"/><path d="M1086.2 207 V211" stroke="#888" stroke-width="1"/><path d="M1141.4 207 V211" stroke="#888" stroke-width="1"/><path d="M1196.6 207 V211" stroke="#888" stroke-width="1"/><path d="M1251.8 207 V211" stroke="#888" stroke-width="1"/><path d="M1307.0 207 V211" stroke="#888" stroke-width="1"/><path d="M1362.3 207 V211" stroke="#888" stroke-width="1"/><path d="M1417.5 207 V211" stroke="#888" stroke-width="1"/><path d="M1472.7 207 V211" stroke="#888" stroke-width="1"/><path d="M1527.9 207 V211" stroke="#888" stroke-width="1"/><path d="M1583.1 207 V211" stroke="#888" stroke-width="1"/><path d="M1638.4 207 V211" stroke="#888" stroke-width="1"/><path d="M1693.6 207 V211" stroke="#888" stroke-width="1"/><path d="M1748.8 207 V211" stroke="#888" stroke-width="1"/><path d="M1804.0 207 V211" stroke="#888" stroke-width="1"/><path d="M1859.2 207 V211" stroke="#888" stroke-width="1"/></svg><div class="t" style="left:85.9px;top:1161.54px;font-size:12px;line-height:12px;font-weight:normal;color:#444;letter-spacing:0px;transform:scaleX(1.6449);letter-spacing:0">0</div><div class="t" style="left:141.12px;top:1161.54px;font-size:12px;line-height:12px;font-weight:normal;color:#444;letter-spacing:0px;transform:scaleX(1.6449);letter-spacing:0">1</div><div class="t" style="left:196.33999999999997px;top:1161.54px;font-size:12px;line-height:12px;font-weight:normal;color:#444;letter-spacing:0px;transform:scaleX(1.6449);letter-spacing:0">2</div><div class="t" style="left:251.56px;top:1161.54px;font-size:12px;line-height:12px;font-weight:normal;color:#444;letter-spacing:0px;transform:scaleX(1.6449);letter-spacing:0">3</div><div class="t" style="left:306.78px;top:1161.54px;font-size:12px;line-height:12px;font-weight:normal;color:#444;letter-spacing:0px;transform:scaleX(1.6449);letter-spacing:0">4</div><div class="t" style="left:362.0px;top:1161.54px;font-size:12px;line-height:12px;font-weight:normal;color:#444;letter-spacing:0px;transform:scaleX(1.6449);letter-spacing:0">5</div><div class="t" style="left:417.21999999999997px;top:1161.54px;font-size:12px;line-height:12px;font-weight:normal;color:#444;letter-spacing:0px;transform:scaleX(1.6449);letter-spacing:0">6</div><div class="t" style="left:472.43999999999994px;top:1161.54px;font-size:12px;line-height:12px;font-weight:normal;color:#444;letter-spacing:0px;transform:scaleX(1.6449);letter-spacing:0">7</div><div class="t" style="left:527.6600000000001px;top:1161.54px;font-size:12px;line-height:12px;font-weight:normal;color:#444;letter-spacing:0px;transform:scaleX(1.6449);letter-spacing:0">8</div><div class="t" style="left:582.8800000000001px;top:1161.54px;font-size:12px;line-height:12px;font-weight:normal;color:#444;letter-spacing:0px;transform:scaleX(1.6449);letter-spacing:0">9</div><div class="t" style="left:630.1000000000001px;top:1161.54px;font-size:12px;line-height:12px;font-weight:normal;color:#444;letter-spacing:0px;transform:scaleX(2.0211);letter-spacing:0">10</div><div class="t" style="left:685.32px;top:1161.54px;font-size:12px;line-height:12px;font-weight:normal;color:#444;letter-spacing:0px;transform:scaleX(2.1654);letter-spacing:0">11</div><div class="t" style="left:740.5400000000001px;top:1161.54px;font-size:12px;line-height:12px;font-weight:normal;color:#444;letter-spacing:0px;transform:scaleX(2.0211);letter-spacing:0">12</div><div class="t" style="left:795.7600000000001px;top:1161.54px;font-size:12px;line-height:12px;font-weight:normal;color:#444;letter-spacing:0px;transform:scaleX(2.0211);letter-spacing:0">13</div><div class="t" style="left:850.98px;top:1161.54px;font-size:12px;line-height:12px;font-weight:normal;color:#444;letter-spacing:0px;transform:scaleX(2.0211);letter-spacing:0">14</div><div class="t" style="left:906.2px;top:1161.54px;font-size:12px;line-height:12px;font-weight:normal;color:#444;letter-spacing:0px;transform:scaleX(2.0211);letter-spacing:0">15</div><div class="t" style="left:961.4200000000001px;top:1161.54px;font-size:12px;line-height:12px;font-weight:normal;color:#444;letter-spacing:0px;transform:scaleX(2.0211);letter-spacing:0">16</div><div class="t" style="left:1016.6400000000001px;top:1161.54px;font-size:12px;line-height:12px;font-weight:normal;color:#444;letter-spacing:0px;transform:scaleX(2.0211);letter-spacing:0">17</div><div class="t" style="left:1071.8600000000001px;top:1161.54px;font-size:12px;line-height:12px;font-weight:normal;color:#444;letter-spacing:0px;transform:scaleX(2.0211);letter-spacing:0">18</div><div class="t" style="left:1127.0800000000002px;top:1161.54px;font-size:12px;line-height:12px;font-weight:normal;color:#444;letter-spacing:0px;transform:scaleX(2.0211);letter-spacing:0">19</div><div class="t" style="left:1182.3000000000002px;top:1161.54px;font-size:12px;line-height:12px;font-weight:normal;color:#444;letter-spacing:0px;transform:scaleX(2.0211);letter-spacing:0">20</div><div class="t" style="left:1237.52px;top:1161.54px;font-size:12px;line-height:12px;font-weight:normal;color:#444;letter-spacing:0px;transform:scaleX(2.0211);letter-spacing:0">21</div><div class="t" style="left:1292.74px;top:1161.54px;font-size:12px;line-height:12px;font-weight:normal;color:#444;letter-spacing:0px;transform:scaleX(2.0211);letter-spacing:0">22</div><div class="t" style="left:1347.96px;top:1161.54px;font-size:12px;line-height:12px;font-weight:normal;color:#444;letter-spacing:0px;transform:scaleX(2.0211);letter-spacing:0">23</div><div class="t" style="left:1403.18px;top:1161.54px;font-size:12px;line-height:12px;font-weight:normal;color:#444;letter-spacing:0px;transform:scaleX(2.0211);letter-spacing:0">24</div><div class="t" style="left:1458.4px;top:1161.54px;font-size:12px;line-height:12px;font-weight:normal;color:#444;letter-spacing:0px;transform:scaleX(2.0211);letter-spacing:0">25</div><div class="t" style="left:1513.6200000000001px;top:1161.54px;font-size:12px;line-height:12px;font-weight:normal;color:#444;letter-spacing:0px;transform:scaleX(2.0211);letter-spacing:0">26</div><div class="t" style="left:1568.8400000000001px;top:1161.54px;font-size:12px;line-height:12px;font-weight:normal;color:#444;letter-spacing:0px;transform:scaleX(2.0211);letter-spacing:0">27</div><div class="t" style="left:1624.06px;top:1161.54px;font-size:12px;line-height:12px;font-weight:normal;color:#444;letter-spacing:0px;transform:scaleX(2.0211);letter-spacing:0">28</div><div class="t" style="left:1679.28px;top:1161.54px;font-size:12px;line-height:12px;font-weight:normal;color:#444;letter-spacing:0px;transform:scaleX(2.0211);letter-spacing:0">29</div><div class="t" style="left:1734.5px;top:1161.54px;font-size:12px;line-height:12px;font-weight:normal;color:#444;letter-spacing:0px;transform:scaleX(2.0211);letter-spacing:0">30</div><div class="t" style="left:1789.72px;top:1161.54px;font-size:12px;line-height:12px;font-weight:normal;color:#444;letter-spacing:0px;transform:scaleX(2.0211);letter-spacing:0">31</div><div class="t" style="left:1844.94px;top:1161.54px;font-size:12px;line-height:12px;font-weight:normal;color:#444;letter-spacing:0px;transform:scaleX(2.0211);letter-spacing:0">32</div><div class="t" style="left:59.900000000000006px;top:1146.04px;font-size:12px;line-height:12px;font-weight:normal;color:#444;letter-spacing:0px;transform:scaleX(1.6748);">0</div><div class="t" style="left:910.6px;top:1178.94px;font-size:12px;line-height:12px;font-weight:bold;color:#444;letter-spacing:0px;transform:scaleX(2.2182);">Länge [km]</div><div style="left:27.5px;top:1033px;width:20px;height:55px;overflow:visible"><div class="t" style="left:0;top:55px;font-size:23px;line-height:21px;font-weight:bold;color:#3a3a3a;transform-origin:0 0;transform:rotate(-90deg) scaleX(0.545)">Höhe [m]</div></div><div style="left:52px;top:160px;width:755px;height:894px;background:#7a8a99;border-radius:2px 2px 0 0"></div><div style="left:66px;top:162px;width:727px;height:1px;background:#333"></div><div style="left:66px;top:163px;width:727px;height:1px;background:#b8cfe5"></div><div style="left:54px;top:174px;width:1px;height:866px;background:#333"></div><div style="left:55px;top:174px;width:1px;height:866px;background:#b8cfe5"></div><div style="left:66px;top:1051px;width:727px;height:1px;background:#333"></div><div style="left:66px;top:1052px;width:727px;height:1px;background:#b8cfe5"></div><div style="left:804px;top:174px;width:1px;height:866px;background:#333"></div><div style="left:805px;top:174px;width:1px;height:866px;background:#b8cfe5"></div><div style="left:57px;top:165px;width:745px;height:884px;background:#eeeeee"></div><div style="left:57px;top:165px;width:745px;height:21px;background:#eeeeee"></div><div style="left:57px;top:186px;width:745px;height:1px;background:#b8cfe5"></div><div class="t" style="left:62.3px;top:169.84px;font-size:12px;line-height:12px;font-weight:bold;color:#333;letter-spacing:0px;transform:scaleX(1.2237);">Maps and Themes</div><svg style="position:absolute;left:196px;top:168px" width="582" height="16"><rect x="0" y="0" width="582" height="16" fill="url(#bumpI)" transform="translate(0,0)"/></svg><svg style="position:absolute;left:783px;top:169px" width="15" height="15" viewBox="0 0 15 15" shape-rendering="crispEdges">
<rect x="0" y="0" width="15" height="15" fill="#ffffff"/><rect x="1" y="1" width="13" height="13" fill="#6382bf"/>
<rect x="0" y="0" width="14" height="1" fill="#222"/><rect x="0" y="0" width="1" height="14" fill="#222"/>
<rect x="2" y="2" width="10" height="10" fill="#e4eef8"/>
<rect x="12" y="2" width="1" height="11" fill="#222"/><rect x="3" y="12" width="10" height="1" fill="#222"/>
<path d="M3 3 L11 11 M11 3 L3 11" stroke="#111" stroke-width="1.3" shape-rendering="auto"/></svg><div class="t" style="left:67.3px;top:198.84px;font-size:12px;line-height:12px;font-weight:bold;color:#333;letter-spacing:0px;transform:scaleX(1.2302);">My Maps:</div><div style="left:67px;top:217px;width:724px;height:161px;border:1px solid #7a8a99;background:#eeeeee"></div><div class="t" style="left:68.7px;top:220.64px;font-size:12px;line-height:12px;font-weight:normal;color:#333;letter-spacing:0px;transform:scaleX(1.1536);">Beschreibung</div><div class="t" style="left:739.7px;top:220.64px;font-size:12px;line-height:12px;font-weight:normal;color:#333;letter-spacing:0px;transform:scaleX(1.1245);">Offline</div><div style="left:789px;top:218px;width:1px;height:17px;background:#7a8a99"></div><div style="left:68px;top:235px;width:721px;height:15px;background:#ffffff"></div><div style="left:68px;top:250px;width:721px;height:1px;background:#7a8a99"></div><div style="left:738px;top:235px;width:1px;height:16px;background:#7a8a99"></div><div style="left:789px;top:235px;width:1px;height:16px;background:#7a8a99"></div><div class="t" style="left:68.7px;top:237.44px;font-size:12px;line-height:12px;font-weight:normal;color:#333;letter-spacing:0px;transform:scaleX(1.1817);">OpenStreetMap - a map of the world, created by people like you and free to use under an open license.</div><div style="left:743px;top:236px;width:13px;height:13px;border:1px solid #7a8a99;background:linear-gradient(#dde8f3,#fff 25%,#dde8f3 55%,#c0d4ea)"></div><div style="left:68px;top:251px;width:721px;height:15px;background:#e8e8e8"></div><div style="left:68px;top:266px;width:721px;height:1px;background:#7a8a99"></div><div style="left:738px;top:251px;width:1px;height:16px;background:#7a8a99"></div><div style="left:789px;top:251px;width:1px;height:16px;background:#7a8a99"></div><div class="t" style="left:68.7px;top:253.44px;font-size:12px;line-height:12px;font-weight:normal;color:#333;letter-spacing:0px;transform:scaleX(1.1268);">OpenCycleMap.org - the OpenStreetMap Cycle Map</div><div style="left:743px;top:252px;width:13px;height:13px;border:1px solid #7a8a99;background:linear-gradient(#dde8f3,#fff 25%,#dde8f3 55%,#c0d4ea)"></div><div style="left:68px;top:267px;width:721px;height:15px;background:#ffffff"></div><div style="left:68px;top:282px;width:721px;height:1px;background:#7a8a99"></div><div style="left:738px;top:267px;width:1px;height:16px;background:#7a8a99"></div><div style="left:789px;top:267px;width:1px;height:16px;background:#7a8a99"></div><div class="t" style="left:68.7px;top:269.44px;font-size:12px;line-height:12px;font-weight:normal;color:#333;letter-spacing:0px;transform:scaleX(1.1500);">openandromaps/Balkan.map</div><div style="left:743px;top:268px;width:13px;height:13px;border:1px solid #7a8a99;background:linear-gradient(#dde8f3,#fff 25%,#dde8f3 55%,#c0d4ea)"></div><svg style="position:absolute;left:743px;top:268px" width="13" height="13"><path d="M3 5 H5 V8 L9.8 3 L10.2 3.8 L5 10.2 H3 Z" fill="#1a1a1a"/></svg><div style="left:68px;top:283px;width:721px;height:15px;background:#e8e8e8"></div><div style="left:68px;top:298px;width:721px;height:1px;background:#7a8a99"></div><div style="left:738px;top:283px;width:1px;height:16px;background:#7a8a99"></div><div style="left:789px;top:283px;width:1px;height:16px;background:#7a8a99"></div><div class="t" style="left:68.7px;top:285.44px;font-size:12px;line-height:12px;font-weight:normal;color:#333;letter-spacing:0px;transform:scaleX(1.1520);">openandromaps/Malta.map</div><div style="left:743px;top:284px;width:13px;height:13px;border:1px solid #7a8a99;background:linear-gradient(#dde8f3,#fff 25%,#dde8f3 55%,#c0d4ea)"></div><svg style="position:absolute;left:743px;top:284px" width="13" height="13"><path d="M3 5 H5 V8 L9.8 3 L10.2 3.8 L5 10.2 H3 Z" fill="#1a1a1a"/></svg><div style="left:68px;top:299px;width:721px;height:15px;background:#ffffff"></div><div style="left:68px;top:314px;width:721px;height:1px;background:#7a8a99"></div><div style="left:738px;top:299px;width:1px;height:16px;background:#7a8a99"></div><div style="left:789px;top:299px;width:1px;height:16px;background:#7a8a99"></div><div class="t" style="left:68.7px;top:301.44px;font-size:12px;line-height:12px;font-weight:normal;color:#333;letter-spacing:0px;transform:scaleX(1.1455);">mapsforge/mapsforge_albania.map</div><div style="left:743px;top:300px;width:13px;height:13px;border:1px solid #7a8a99;background:linear-gradient(#dde8f3,#fff 25%,#dde8f3 55%,#c0d4ea)"></div><svg style="position:absolute;left:743px;top:300px" width="13" height="13"><path d="M3 5 H5 V8 L9.8 3 L10.2 3.8 L5 10.2 H3 Z" fill="#1a1a1a"/></svg><div style="left:68px;top:315px;width:721px;height:15px;background:#e8e8e8"></div><div style="left:68px;top:330px;width:721px;height:1px;background:#7a8a99"></div><div style="left:738px;top:315px;width:1px;height:16px;background:#7a8a99"></div><div style="left:789px;top:315px;width:1px;height:16px;background:#7a8a99"></div><div class="t" style="left:68.7px;top:317.44px;font-size:12px;line-height:12px;font-weight:normal;color:#333;letter-spacing:0px;transform:scaleX(1.1401);">freizeitkarte/Freizeitkarte_IRL.map</div><div style="left:743px;top:316px;width:13px;height:13px;border:1px solid #7a8a99;background:linear-gradient(#dde8f3,#fff 25%,#dde8f3 55%,#c0d4ea)"></div><svg style="position:absolute;left:743px;top:316px" width="13" height="13"><path d="M3 5 H5 V8 L9.8 3 L10.2 3.8 L5 10.2 H3 Z" fill="#1a1a1a"/></svg><div style="left:68px;top:331px;width:721px;height:15px;background:#ffffff"></div><div style="left:68px;top:346px;width:721px;height:1px;background:#7a8a99"></div><div style="left:738px;top:331px;width:1px;height:16px;background:#7a8a99"></div><div style="left:789px;top:331px;width:1px;height:16px;background:#7a8a99"></div><div class="t" style="left:68.7px;top:333.44px;font-size:12px;line-height:12px;font-weight:normal;color:#333;letter-spacing:0px;transform:scaleX(1.1662);">bbbike/albania.map</div><div style="left:743px;top:332px;width:13px;height:13px;border:1px solid #7a8a99;background:linear-gradient(#dde8f3,#fff 25%,#dde8f3 55%,#c0d4ea)"></div><svg style="position:absolute;left:743px;top:332px" width="13" height="13"><path d="M3 5 H5 V8 L9.8 3 L10.2 3.8 L5 10.2 H3 Z" fill="#1a1a1a"/></svg><div class="btn" style="left:67px;top:384px;width:86px;height:25px;"></div><div class="t" style="left:84.3px;top:390.84px;font-size:12px;line-height:12px;font-weight:bold;color:#333;letter-spacing:0px;transform:scaleX(1.2123);">Display</div><div class="t" style="left:67.3px;top:431.24px;font-size:12px;line-height:12px;font-weight:bold;color:#333;letter-spacing:0px;transform:scaleX(1.2236);">My Themes:</div><div style="left:67px;top:449px;width:724px;height:160px;border:1px solid #7a8a99;background:#eeeeee"></div><div class="t" style="left:68.7px;top:452.84px;font-size:12px;line-height:12px;font-weight:normal;color:#333;letter-spacing:0px;transform:scaleX(1.1536);">Beschreibung</div><div style="left:68px;top:467px;width:721px;height:15px;background:#ffffff"></div><div style="left:68px;top:482px;width:721px;height:1px;background:#7a8a99"></div><div class="t" style="left:68.7px;top:468.64px;font-size:12px;line-height:12px;font-weight:normal;color:#333;letter-spacing:0px;transform:scaleX(1.1575);">A render-theme similar to the OpenStreetMap Osmarender style</div><div class="btn" style="left:67px;top:615px;width:73px;height:25px;"></div><div class="t" style="left:84.3px;top:621.84px;font-size:12px;line-height:12px;font-weight:bold;color:#333;letter-spacing:0px;transform:scaleX(1.2106);">Apply</div><div class="t" style="left:67.3px;top:662.04px;font-size:12px;line-height:12px;font-weight:bold;color:#333;letter-spacing:0px;transform:scaleX(1.2382);">Maps and themes available for download:</div><div style="left:67px;top:680px;width:724px;height:160px;border:1px solid #7a8a99;background:#eeeeee"></div><div class="t" style="left:68.60000000000001px;top:683.84px;font-size:12px;line-height:12px;font-weight:normal;color:#333;letter-spacing:0px;transform:scaleX(1.1316);">Data Source</div><div class="t" style="left:188.2px;top:683.84px;font-size:12px;line-height:12px;font-weight:normal;color:#333;letter-spacing:0px;transform:scaleX(1.1536);">Beschreibung</div><div class="t" style="left:716.5px;top:683.84px;font-size:12px;line-height:12px;font-weight:normal;color:#333;letter-spacing:0px;transform:scaleX(1.0487);">Size</div><div style="left:68px;top:697px;width:707px;height:142px;overflow:hidden"><div style="left:0px;top:1px;width:706px;height:15px;background:#e8e8e8"></div><div style="left:0px;top:16px;width:706px;height:1px;background:#7a8a99"></div><div style="left:119px;top:0px;width:1px;height:16px;background:#7a8a99"></div><div style="left:647px;top:0px;width:1px;height:16px;background:#7a8a99"></div><div class="t" style="left:0.6000000000000056px;top:3.04px;font-size:12px;line-height:12px;font-weight:normal;color:#333;letter-spacing:0px;transform:scaleX(1.1492);">Openandromaps...</div><div class="t" style="left:120.2px;top:3.04px;font-size:12px;line-height:12px;font-weight:normal;color:#333;letter-spacing:0px;transform:scaleX(1.1705);">Germany/brandenburg.zip</div><div class="t" style="left:648.5px;top:3.04px;font-size:12px;line-height:12px;font-weight:normal;color:#333;letter-spacing:0px;transform:scaleX(1.1174);">61 MB</div><div style="left:0px;top:17px;width:706px;height:15px;background:#ffffff"></div><div style="left:0px;top:32px;width:706px;height:1px;background:#7a8a99"></div><div style="left:119px;top:16px;width:1px;height:16px;background:#7a8a99"></div><div style="left:647px;top:16px;width:1px;height:16px;background:#7a8a99"></div><div class="t" style="left:0.6000000000000056px;top:19.04px;font-size:12px;line-height:12px;font-weight:normal;color:#333;letter-spacing:0px;transform:scaleX(1.1492);">Openandromaps...</div><div class="t" style="left:120.2px;top:19.04px;font-size:12px;line-height:12px;font-weight:normal;color:#333;letter-spacing:0px;transform:scaleX(1.1493);">Germany/Germany.zip</div><div class="t" style="left:648.5px;top:19.04px;font-size:12px;line-height:12px;font-weight:normal;color:#333;letter-spacing:0px;transform:scaleX(1.1468);">1337 MB</div><div style="left:0px;top:33px;width:706px;height:15px;background:#e8e8e8"></div><div style="left:0px;top:48px;width:706px;height:1px;background:#7a8a99"></div><div style="left:119px;top:32px;width:1px;height:16px;background:#7a8a99"></div><div style="left:647px;top:32px;width:1px;height:16px;background:#7a8a99"></div><div class="t" style="left:0.6000000000000056px;top:35.04px;font-size:12px;line-height:12px;font-weight:normal;color:#333;letter-spacing:0px;transform:scaleX(1.1492);">Openandromaps...</div><div class="t" style="left:120.2px;top:35.04px;font-size:12px;line-height:12px;font-weight:normal;color:#333;letter-spacing:0px;transform:scaleX(1.1231);">Germany/Germany_Mid_cycle.zip</div><div class="t" style="left:648.5px;top:35.04px;font-size:12px;line-height:12px;font-weight:normal;color:#333;letter-spacing:0px;transform:scaleX(1.1344);">467 MB</div><div style="left:0px;top:49px;width:706px;height:15px;background:#ffffff"></div><div style="left:0px;top:64px;width:706px;height:1px;background:#7a8a99"></div><div style="left:119px;top:48px;width:1px;height:16px;background:#7a8a99"></div><div style="left:647px;top:48px;width:1px;height:16px;background:#7a8a99"></div><div class="t" style="left:0.6000000000000056px;top:51.04px;font-size:12px;line-height:12px;font-weight:normal;color:#333;letter-spacing:0px;transform:scaleX(1.1492);">Openandromaps...</div><div class="t" style="left:120.2px;top:51.04px;font-size:12px;line-height:12px;font-weight:normal;color:#333;letter-spacing:0px;transform:scaleX(1.1223);">Germany/Germany_Mid_hike.zip</div><div class="t" style="left:648.5px;top:51.04px;font-size:12px;line-height:12px;font-weight:normal;color:#333;letter-spacing:0px;transform:scaleX(1.1344);">470 MB</div><div style="left:0px;top:65px;width:706px;height:15px;background:#e8e8e8"></div><div style="left:0px;top:80px;width:706px;height:1px;background:#7a8a99"></div><div style="left:119px;top:64px;width:1px;height:16px;background:#7a8a99"></div><div style="left:647px;top:64px;width:1px;height:16px;background:#7a8a99"></div><div class="t" style="left:0.6000000000000056px;top:67.04px;font-size:12px;line-height:12px;font-weight:normal;color:#333;letter-spacing:0px;transform:scaleX(1.1492);">Openandromaps...</div><div class="t" style="left:120.2px;top:67.04px;font-size:12px;line-height:12px;font-weight:normal;color:#333;letter-spacing:0px;transform:scaleX(1.1337);">Germany/Germany_North_cycle.zip</div><div class="t" style="left:648.5px;top:67.04px;font-size:12px;line-height:12px;font-weight:normal;color:#333;letter-spacing:0px;transform:scaleX(1.1344);">594 MB</div><div style="left:0px;top:81px;width:706px;height:15px;background:#ffffff"></div><div style="left:0px;top:96px;width:706px;height:1px;background:#7a8a99"></div><div style="left:119px;top:80px;width:1px;height:16px;background:#7a8a99"></div><div style="left:647px;top:80px;width:1px;height:16px;background:#7a8a99"></div><div class="t" style="left:0.6000000000000056px;top:83.04px;font-size:12px;line-height:12px;font-weight:normal;color:#333;letter-spacing:0px;transform:scaleX(1.1492);">Openandromaps...</div><div class="t" style="left:120.2px;top:83.04px;font-size:12px;line-height:12px;font-weight:normal;color:#333;letter-spacing:0px;transform:scaleX(1.1332);">Germany/Germany_North_hike.zip</div><div class="t" style="left:648.5px;top:83.04px;font-size:12px;line-height:12px;font-weight:normal;color:#333;letter-spacing:0px;transform:scaleX(1.1344);">594 MB</div><div style="left:0px;top:97px;width:706px;height:15px;background:#e8e8e8"></div><div style="left:0px;top:112px;width:706px;height:1px;background:#7a8a99"></div><div style="left:119px;top:96px;width:1px;height:16px;background:#7a8a99"></div><div style="left:647px;top:96px;width:1px;height:16px;background:#7a8a99"></div><div class="t" style="left:0.6000000000000056px;top:99.04px;font-size:12px;line-height:12px;font-weight:normal;color:#333;letter-spacing:0px;transform:scaleX(1.1492);">Openandromaps...</div><div class="t" style="left:120.2px;top:99.04px;font-size:12px;line-height:12px;font-weight:normal;color:#333;letter-spacing:0px;transform:scaleX(1.1325);">Germany/Germany_South_cycle.zip</div><div class="t" style="left:648.5px;top:99.04px;font-size:12px;line-height:12px;font-weight:normal;color:#333;letter-spacing:0px;transform:scaleX(1.1344);">455 MB</div><div style="left:0px;top:113px;width:706px;height:15px;background:#0099ff"></div><div style="left:0px;top:128px;width:706px;height:1px;background:#7a8a99"></div><div style="left:119px;top:112px;width:1px;height:16px;background:#7a8a99"></div><div style="left:647px;top:112px;width:1px;height:16px;background:#7a8a99"></div><div class="t" style="left:0.6000000000000056px;top:115.04px;font-size:12px;line-height:12px;font-weight:normal;color:#333;letter-spacing:0px;transform:scaleX(1.1492);">Openandromaps...</div><div class="t" style="left:120.2px;top:115.04px;font-size:12px;line-height:12px;font-weight:normal;color:#333;letter-spacing:0px;transform:scaleX(1.1319);">Germany/Germany_South_hike.zip</div><div class="t" style="left:648.5px;top:115.04px;font-size:12px;line-height:12px;font-weight:normal;color:#333;letter-spacing:0px;transform:scaleX(1.1344);">456 MB</div><div style="left:0px;top:129px;width:706px;height:15px;background:#e8e8e8"></div><div style="left:0px;top:144px;width:706px;height:1px;background:#7a8a99"></div><div style="left:119px;top:128px;width:1px;height:16px;background:#7a8a99"></div><div style="left:647px;top:128px;width:1px;height:16px;background:#7a8a99"></div><div class="t" style="left:0.6000000000000056px;top:131.04px;font-size:12px;line-height:12px;font-weight:normal;color:#333;letter-spacing:0px;transform:scaleX(1.1492);">Openandromaps...</div><div class="t" style="left:120.2px;top:131.04px;font-size:12px;line-height:12px;font-weight:normal;color:#333;letter-spacing:0px;transform:scaleX(1.1685);">Germany/hamburg.zip</div><div class="t" style="left:648.5px;top:131.04px;font-size:12px;line-height:12px;font-weight:normal;color:#333;letter-spacing:0px;transform:scaleX(1.1174);">19 MB</div></div><div style="left:774px;top:697px;width:16px;height:142px;background:#eeeeee;border-left:2px solid #7a8a99"></div><div style="left:775px;top:697px;width:15px;height:16px;border:1px solid #7a8a99;border-top:none;background:linear-gradient(#fff,#eee)"></div><svg style="position:absolute;left:778px;top:701px" width="10" height="6"><path d="M1 5 L5 1 L9 5 Z" fill="#222"/></svg><div style="left:775px;top:823px;width:15px;height:16px;border:1px solid #7a8a99;border-bottom:none;background:linear-gradient(#fff,#eee)"></div><svg style="position:absolute;left:778px;top:828px" width="10" height="6"><path d="M1 1 L9 1 L5 5 Z" fill="#222"/></svg><div style="left:775px;top:782px;width:15px;height:15px;border:1px solid #6382bf;background:linear-gradient(90deg,#dde8f3,#fff 40%,#c8ddf2)"></div><div style="left:779px;top:787px;width:8px;height:1px;background:#6382bf"></div><div style="left:779px;top:789px;width:8px;height:1px;background:#6382bf"></div><div style="left:779px;top:791px;width:8px;height:1px;background:#6382bf"></div><div class="btn" style="left:67px;top:846px;width:105px;height:25px;"></div><div class="t" style="left:84.3px;top:852.84px;font-size:12px;line-height:12px;font-weight:bold;color:#333;letter-spacing:0px;transform:scaleX(1.2096);">Download</div><div class="btn" style="left:689px;top:1014px;width:103px;height:25px;"></div><div class="t" style="left:706.3px;top:1020.84px;font-size:12px;line-height:12px;font-weight:bold;color:#333;letter-spacing:0px;transform:scaleX(1.2233);">Schließen</div><div style="left:976px;top:219px;width:627px;height:855px;background:#6382bf;border-radius:2px 2px 0 0"></div><div style="left:990px;top:221px;width:599px;height:1px;background:#333"></div><div style="left:990px;top:222px;width:599px;height:1px;background:#b8cfe5"></div><div style="left:978px;top:233px;width:1px;height:827px;background:#333"></div><div style="left:979px;top:233px;width:1px;height:827px;background:#b8cfe5"></div><div style="left:990px;top:1071px;width:599px;height:1px;background:#333"></div><div style="left:990px;top:1072px;width:599px;height:1px;background:#b8cfe5"></div><div style="left:1600px;top:233px;width:1px;height:827px;background:#333"></div><div style="left:1601px;top:233px;width:1px;height:827px;background:#b8cfe5"></div><div style="left:981px;top:224px;width:617px;height:845px;background:#eeeeee"></div><div style="left:981px;top:224px;width:617px;height:21px;background:#b8cfe5"></div><div style="left:981px;top:245px;width:617px;height:1px;background:#6382bf"></div><div class="t" style="left:986.2px;top:228.84px;font-size:12px;line-height:12px;font-weight:bold;color:#333;letter-spacing:0px;transform:scaleX(1.1964);">Downloads</div><svg style="position:absolute;left:1071px;top:227px" width="501" height="16"><rect x="0" y="0" width="501" height="16" fill="url(#bumpA)" transform="translate(0,0)"/></svg><svg style="position:absolute;left:1579px;top:228px" width="15" height="15" viewBox="0 0 15 15" shape-rendering="crispEdges">
<rect x="0" y="0" width="15" height="15" fill="#ffffff"/><rect x="1" y="1" width="13" height="13" fill="#6382bf"/>
<rect x="0" y="0" width="14" height="1" fill="#222"/><rect x="0" y="0" width="1" height="14" fill="#222"/>
<rect x="2" y="2" width="10" height="10" fill="#e4eef8"/>
<rect x="12" y="2" width="1" height="11" fill="#222"/><rect x="3" y="12" width="10" height="1" fill="#222"/>
<path d="M3 3 L11 11 M11 3 L3 11" stroke="#111" stroke-width="1.3" shape-rendering="auto"/></svg><div class="t" style="left:991px;top:257.84px;font-size:12px;line-height:12px;font-weight:bold;color:#333;letter-spacing:0px;transform:scaleX(1.2024);">Downloads:</div><div style="left:991px;top:276px;width:597px;height:749px;border:1px solid #7a8a99;background:#eeeeee"></div><div class="t" style="left:992.2px;top:279.24px;font-size:12px;line-height:12px;font-weight:normal;color:#333;letter-spacing:0px;transform:scaleX(1.1536);">Beschreibung</div><div class="t" style="left:1486.2px;top:279.24px;font-size:12px;line-height:12px;font-weight:normal;color:#333;letter-spacing:0px;transform:scaleX(1.1689);">Status</div><div style="left:1586px;top:277px;width:1px;height:15px;background:#7a8a99"></div><div style="left:992px;top:292px;width:595px;height:16px;background:#ffffff"></div><div style="left:992px;top:308px;width:595px;height:1px;background:#7a8a99"></div><div style="left:1485px;top:292px;width:1px;height:16px;background:#7a8a99"></div><div style="left:1585px;top:292px;width:1px;height:16px;background:#7a8a99"></div><div class="t" style="left:992.2px;top:295.54px;font-size:12px;line-height:12px;font-weight:normal;color:#333;letter-spacing:0px;transform:scaleX(1.1291);">Openandromaps Maps: Germany/Germany_South_hike.zip</div><div class="t" style="left:1486.2px;top:295.54px;font-size:12px;line-height:12px;font-weight:normal;color:#333;letter-spacing:0px;transform:scaleX(1.1591);">Downloading ...</div><div class="btn" style="left:1486px;top:1033px;width:102px;height:25px;"></div><div class="t" style="left:1503.3px;top:1039.84px;font-size:12px;line-height:12px;font-weight:bold;color:#333;letter-spacing:0px;transform:scaleX(1.2233);">Schließen</div></body></html>
